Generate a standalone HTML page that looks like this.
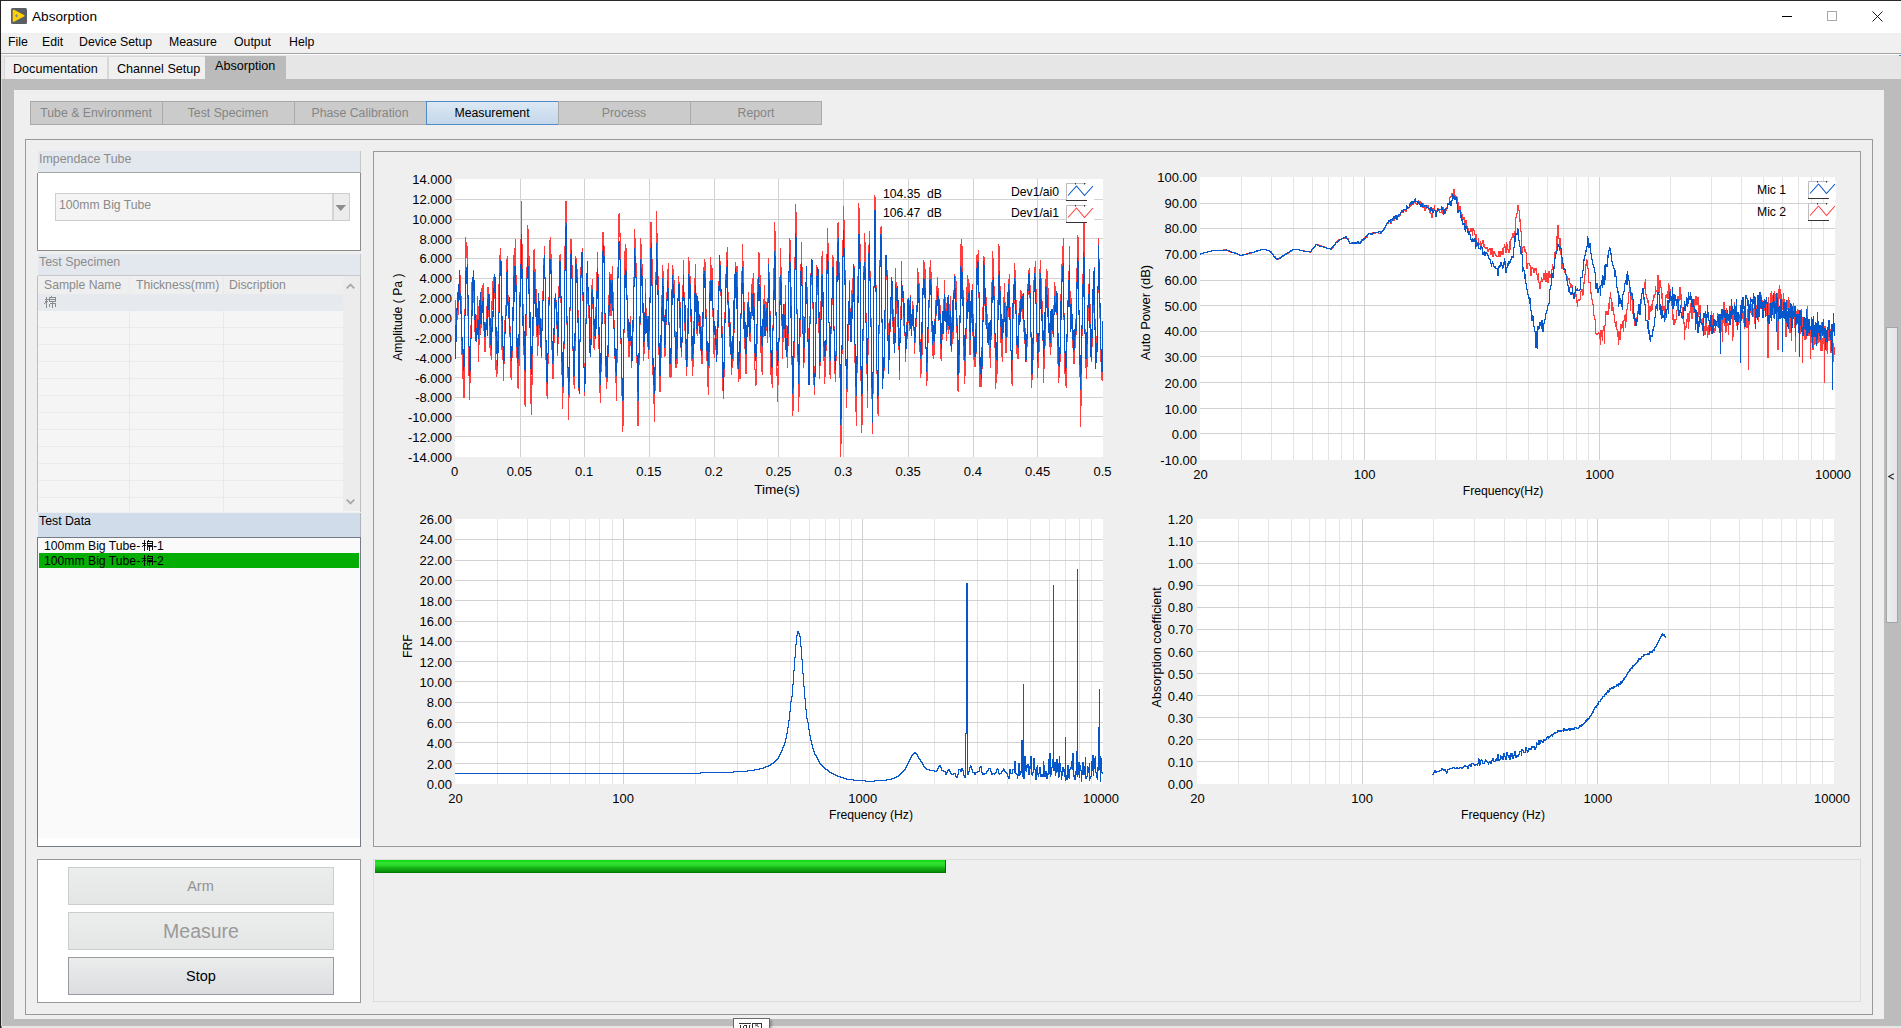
<!DOCTYPE html>
<html><head><meta charset="utf-8"><title>Absorption</title>
<style>html,body{margin:0;padding:0;} body{width:1901px;height:1028px;overflow:hidden;position:relative;font-family:"Liberation Sans", sans-serif;}</style>
</head><body>
<div style="position:absolute;left:0px;top:0px;width:1901px;height:1028px;box-sizing:border-box;background:#bcbcbc"></div>
<div style="position:absolute;left:0px;top:0px;width:1901px;height:33px;box-sizing:border-box;background:#fff"></div>
<div style="position:absolute;left:0px;top:0px;width:1901px;height:1px;box-sizing:border-box;background:#2b2b2b"></div>
<div style="position:absolute;left:0px;top:0px;width:1px;height:1028px;box-sizing:border-box;background:#222"></div>
<svg style="position:absolute;left:11px;top:8px" width="16" height="16" viewBox="0 0 16 16"><rect x="0" y="0" width="16" height="16" rx="1.5" fill="#5b5e64"/><path d="M2.6 2.6 L12.6 7.8 L2.6 13 Z" fill="#ffd100" stroke="#ffd100" stroke-width="1.8" stroke-linejoin="round"/><path d="M5.5 6.3V9.3M4 7.8H7" stroke="#7d8590" stroke-width="1"/></svg>
<div style="position:absolute;left:32px;top:10px;font-size:13.6px;line-height:1;color:#000;white-space:pre;">Absorption</div>
<div style="position:absolute;left:1782px;top:16px;width:10px;height:1px;box-sizing:border-box;background:#000"></div>
<div style="position:absolute;left:1827px;top:11px;width:10px;height:10px;box-sizing:border-box;border:1px solid #a8a8a8"></div>
<svg style="position:absolute;left:1872px;top:11px" width="11" height="11" viewBox="0 0 11 11"><path d="M0.5 0.5L10.5 10.5M10.5 0.5L0.5 10.5" stroke="#000" stroke-width="0.9"/></svg>
<div style="position:absolute;left:1px;top:33px;width:1900px;height:20px;box-sizing:border-box;background:#f0f0f0"></div>
<div style="position:absolute;left:8px;top:36px;font-size:12.3px;line-height:1;color:#000;white-space:pre;">File</div>
<div style="position:absolute;left:42px;top:36px;font-size:12.3px;line-height:1;color:#000;white-space:pre;">Edit</div>
<div style="position:absolute;left:79px;top:36px;font-size:12.3px;line-height:1;color:#000;white-space:pre;">Device Setup</div>
<div style="position:absolute;left:169px;top:36px;font-size:12.3px;line-height:1;color:#000;white-space:pre;">Measure</div>
<div style="position:absolute;left:234px;top:36px;font-size:12.3px;line-height:1;color:#000;white-space:pre;">Output</div>
<div style="position:absolute;left:289px;top:36px;font-size:12.3px;line-height:1;color:#000;white-space:pre;">Help</div>
<div style="position:absolute;left:1px;top:53px;width:1900px;height:1px;box-sizing:border-box;background:#a3a3a3"></div>
<div style="position:absolute;left:1px;top:54px;width:1900px;height:1px;box-sizing:border-box;background:#fdfdfd"></div>
<div style="position:absolute;left:1px;top:55px;width:1900px;height:24px;box-sizing:border-box;background:#e6e6e6"></div>
<div style="position:absolute;left:4px;top:56px;width:104px;height:23px;box-sizing:border-box;background:#f0f0f0;border:1px solid #d8d8d8;border-bottom:none"></div>
<div style="position:absolute;left:108px;top:56px;width:98px;height:23px;box-sizing:border-box;background:#f0f0f0;border:1px solid #d8d8d8;border-bottom:none"></div>
<div style="position:absolute;left:205px;top:56px;width:81px;height:23px;box-sizing:border-box;background:#bbbbbb"></div>
<div style="position:absolute;left:13px;top:63px;font-size:12.6px;line-height:1;color:#000;white-space:pre;">Documentation</div>
<div style="position:absolute;left:117px;top:63px;font-size:12.6px;line-height:1;color:#000;white-space:pre;">Channel Setup</div>
<div style="position:absolute;left:215px;top:60px;font-size:12.6px;line-height:1;color:#000;white-space:pre;">Absorption</div>
<div style="position:absolute;left:1px;top:1026px;width:1900px;height:2px;box-sizing:border-box;background:#e6e6e6"></div>
<div style="position:absolute;left:1px;top:79px;width:1px;height:949px;box-sizing:border-box;background:#d9d9d9"></div>
<div style="position:absolute;left:1px;top:1026px;width:1px;height:2px;box-sizing:border-box;background:#2a8cf0"></div>
<div style="position:absolute;left:1899px;top:55px;width:2px;height:1px;box-sizing:border-box;background:#2a8cf0"></div>
<div style="position:absolute;left:14px;top:90px;width:1870px;height:929px;box-sizing:border-box;background:#efefef"></div>
<div style="position:absolute;left:30px;top:101px;width:792px;height:24px;box-sizing:border-box;background:#cbcbcb;border:1px solid #a9a9a9"></div>
<div style="position:absolute;left:30.0px;top:107px;width:132px;text-align:center;font-size:12.3px;line-height:1;color:#858585;white-space:pre;">Tube &amp; Environment</div>
<div style="position:absolute;left:162px;top:101px;width:1px;height:24px;box-sizing:border-box;background:#a9a9a9"></div>
<div style="position:absolute;left:162.0px;top:107px;width:132px;text-align:center;font-size:12.3px;line-height:1;color:#858585;white-space:pre;">Test Specimen</div>
<div style="position:absolute;left:294px;top:101px;width:1px;height:24px;box-sizing:border-box;background:#a9a9a9"></div>
<div style="position:absolute;left:294.0px;top:107px;width:132px;text-align:center;font-size:12.3px;line-height:1;color:#858585;white-space:pre;">Phase Calibration</div>
<div style="position:absolute;left:426px;top:101px;width:1px;height:24px;box-sizing:border-box;background:#a9a9a9"></div>
<div style="position:absolute;left:426px;top:101px;width:133px;height:24px;box-sizing:border-box;background:linear-gradient(#dce8f4,#c4d7ea);border:1px solid #4f8ac9"></div>
<div style="position:absolute;left:426.0px;top:107px;width:132px;text-align:center;font-size:12.3px;line-height:1;color:#000;white-space:pre;">Measurement</div>
<div style="position:absolute;left:558px;top:101px;width:1px;height:24px;box-sizing:border-box;background:#a9a9a9"></div>
<div style="position:absolute;left:558.0px;top:107px;width:132px;text-align:center;font-size:12.3px;line-height:1;color:#858585;white-space:pre;">Process</div>
<div style="position:absolute;left:690px;top:101px;width:1px;height:24px;box-sizing:border-box;background:#a9a9a9"></div>
<div style="position:absolute;left:690.0px;top:107px;width:132px;text-align:center;font-size:12.3px;line-height:1;color:#858585;white-space:pre;">Report</div>
<div style="position:absolute;left:25px;top:139px;width:1848px;height:876px;box-sizing:border-box;border:1px solid #999"></div>
<div style="position:absolute;left:38px;top:151px;width:323px;height:22px;box-sizing:border-box;background:#e3e8ef;border-right:1px solid #c8c8c8;border-bottom:1px solid #a5a5a5"></div>
<div style="position:absolute;left:39px;top:153px;font-size:12.4px;line-height:1;color:#8c8c8c;white-space:pre;">Impendace Tube</div>
<div style="position:absolute;left:37px;top:173px;width:324px;height:78px;box-sizing:border-box;background:#fff;border:1px solid #8c8c8c;border-top:none"></div>
<div style="position:absolute;left:55px;top:193px;width:295px;height:28px;box-sizing:border-box;background:#f4f4f4;border:1px solid #cdcdcd"></div>
<div style="position:absolute;left:332px;top:194px;width:2px;height:26px;box-sizing:border-box;background:#d4d4d4"></div>
<div style="position:absolute;left:334px;top:194px;width:15px;height:26px;box-sizing:border-box;background:#ececec"></div>
<svg style="position:absolute;left:335px;top:205px" width="12" height="7"><path d="M0.5 0H11L5.75 6Z" fill="#8d8d8d"/></svg>
<div style="position:absolute;left:59px;top:199px;font-size:12.2px;line-height:1;color:#8a8a8a;white-space:pre;">100mm Big Tube</div>
<div style="position:absolute;left:38px;top:254px;width:323px;height:22px;box-sizing:border-box;background:#e3e8ef;border-right:1px solid #c8c8c8;border-bottom:1px solid #c8c8c8"></div>
<div style="position:absolute;left:39px;top:256px;font-size:12.4px;line-height:1;color:#8c8c8c;white-space:pre;">Test Specimen</div>
<div style="position:absolute;left:37px;top:276px;width:324px;height:236px;box-sizing:border-box;background:#f5f5f5;border:1px solid #bdbdbd;border-top:none;border-bottom:none"></div>
<div style="position:absolute;left:38px;top:276px;width:305px;height:18px;box-sizing:border-box;background:#efefef"></div>
<div style="position:absolute;left:38px;top:294px;width:305px;height:17px;box-sizing:border-box;background:#e6e9ee"></div>
<div style="position:absolute;left:38px;top:327px;width:305px;height:1px;box-sizing:border-box;background:#ebebeb"></div>
<div style="position:absolute;left:38px;top:344px;width:305px;height:1px;box-sizing:border-box;background:#ebebeb"></div>
<div style="position:absolute;left:38px;top:361px;width:305px;height:1px;box-sizing:border-box;background:#ebebeb"></div>
<div style="position:absolute;left:38px;top:378px;width:305px;height:1px;box-sizing:border-box;background:#ebebeb"></div>
<div style="position:absolute;left:38px;top:395px;width:305px;height:1px;box-sizing:border-box;background:#ebebeb"></div>
<div style="position:absolute;left:38px;top:412px;width:305px;height:1px;box-sizing:border-box;background:#ebebeb"></div>
<div style="position:absolute;left:38px;top:429px;width:305px;height:1px;box-sizing:border-box;background:#ebebeb"></div>
<div style="position:absolute;left:38px;top:446px;width:305px;height:1px;box-sizing:border-box;background:#ebebeb"></div>
<div style="position:absolute;left:38px;top:463px;width:305px;height:1px;box-sizing:border-box;background:#ebebeb"></div>
<div style="position:absolute;left:38px;top:480px;width:305px;height:1px;box-sizing:border-box;background:#ebebeb"></div>
<div style="position:absolute;left:38px;top:497px;width:305px;height:1px;box-sizing:border-box;background:#ebebeb"></div>
<div style="position:absolute;left:129px;top:276px;width:1px;height:235px;box-sizing:border-box;background:#e9e9e9"></div>
<div style="position:absolute;left:223px;top:276px;width:1px;height:235px;box-sizing:border-box;background:#e9e9e9"></div>
<div style="position:absolute;left:343px;top:276px;width:17px;height:235px;box-sizing:border-box;background:#ececec"></div>
<svg style="position:absolute;left:346px;top:283px" width="9" height="6"><path d="M0.7 5.3L4.5 1.5L8.3 5.3" fill="none" stroke="#a8a8a8" stroke-width="1.8"/></svg>
<svg style="position:absolute;left:346px;top:499px" width="9" height="6"><path d="M0.7 0.7L4.5 4.5L8.3 0.7" fill="none" stroke="#a8a8a8" stroke-width="1.8"/></svg>
<div style="position:absolute;left:44px;top:279px;font-size:12.2px;line-height:1;color:#8a8a8a;white-space:pre;">Sample Name</div>
<div style="position:absolute;left:136px;top:279px;font-size:12.2px;line-height:1;color:#8a8a8a;white-space:pre;">Thickness(mm)</div>
<div style="position:absolute;left:229px;top:279px;font-size:12.2px;line-height:1;color:#8a8a8a;white-space:pre;">Discription</div>
<svg style="position:absolute;left:44px;top:296px" width="12" height="12" viewBox="0 0 12 12"><g fill="none" stroke="#8a8a8a" stroke-width="1" shape-rendering="crispEdges">
<path d="M0.5 3.5H4.5M2.5 0.5V11.5M2.5 4.5L0.5 8M2.5 4.5L4.5 6.5"/>
<path d="M7.5 0.5L7 1.5M5.5 1.5H11.5V5.5H5.5ZM5.5 3.5H11.5"/>
<path d="M5.5 7.5V11M5.5 7.5H11.5V10.5H10.5M8.5 5.5V11.5"/>
</g></svg>
<div style="position:absolute;left:38px;top:513px;width:323px;height:24px;box-sizing:border-box;background:#d0dcea;border-right:1px solid #aeb4bc"></div>
<div style="position:absolute;left:39px;top:515px;font-size:12.3px;line-height:1;color:#000;white-space:pre;">Test Data</div>
<div style="position:absolute;left:37px;top:537px;width:324px;height:310px;box-sizing:border-box;background:#fafafa;border:1px solid #757c86"></div>
<div style="position:absolute;left:38px;top:838px;width:322px;height:8px;box-sizing:border-box;background:#fff"></div>
<div style="position:absolute;left:39px;top:553px;width:320px;height:15px;box-sizing:border-box;background:#05ae05"></div>
<div style="position:absolute;left:44px;top:540px;font-size:12.2px;line-height:1;color:#000;white-space:pre;">100mm Big Tube-</div>
<svg style="position:absolute;left:142px;top:540px" width="11" height="11" viewBox="0 0 12 12"><g fill="none" stroke="#000" stroke-width="1" shape-rendering="crispEdges">
<path d="M0.5 3.5H4.5M2.5 0.5V11.5M2.5 4.5L0.5 8M2.5 4.5L4.5 6.5"/>
<path d="M7.5 0.5L7 1.5M5.5 1.5H11.5V5.5H5.5ZM5.5 3.5H11.5"/>
<path d="M5.5 7.5V11M5.5 7.5H11.5V10.5H10.5M8.5 5.5V11.5"/>
</g></svg>
<div style="position:absolute;left:153px;top:540px;font-size:12.2px;line-height:1;color:#000;white-space:pre;">-1</div>
<div style="position:absolute;left:44px;top:555px;font-size:12.2px;line-height:1;color:#000;white-space:pre;">100mm Big Tube-</div>
<svg style="position:absolute;left:142px;top:555px" width="11" height="11" viewBox="0 0 12 12"><g fill="none" stroke="#000" stroke-width="1" shape-rendering="crispEdges">
<path d="M0.5 3.5H4.5M2.5 0.5V11.5M2.5 4.5L0.5 8M2.5 4.5L4.5 6.5"/>
<path d="M7.5 0.5L7 1.5M5.5 1.5H11.5V5.5H5.5ZM5.5 3.5H11.5"/>
<path d="M5.5 7.5V11M5.5 7.5H11.5V10.5H10.5M8.5 5.5V11.5"/>
</g></svg>
<div style="position:absolute;left:153px;top:555px;font-size:12.2px;line-height:1;color:#000;white-space:pre;">-2</div>
<div style="position:absolute;left:373px;top:151px;width:1488px;height:696px;box-sizing:border-box;border:1px solid #9a9a9a"></div>
<div style="position:absolute;left:37px;top:859px;width:324px;height:144px;box-sizing:border-box;background:#fff;border:1px solid #999"></div>
<div style="position:absolute;left:68px;top:867px;width:266px;height:38px;box-sizing:border-box;background:linear-gradient(#eceded,#e4e5e5);border:1px solid #cbced1"></div>
<div style="position:absolute;left:100.5px;top:879px;width:200px;text-align:center;font-size:14.5px;line-height:1;color:#929292;white-space:pre;">Arm</div>
<div style="position:absolute;left:68px;top:912px;width:266px;height:38px;box-sizing:border-box;background:linear-gradient(#eceded,#e4e5e5);border:1px solid #cbced1"></div>
<div style="position:absolute;left:101.0px;top:922px;width:200px;text-align:center;font-size:19.5px;line-height:1;color:#9a9a9a;white-space:pre;">Measure</div>
<div style="position:absolute;left:68px;top:957px;width:266px;height:38px;box-sizing:border-box;background:linear-gradient(#ebecec,#dcdde0);border:1px solid #989ca1"></div>
<div style="position:absolute;left:101.0px;top:969px;width:200px;text-align:center;font-size:14.5px;line-height:1;color:#000;white-space:pre;">Stop</div>
<div style="position:absolute;left:373px;top:859px;width:1488px;height:143px;box-sizing:border-box;border:1px solid #dcdcdc"></div>
<div style="position:absolute;left:375px;top:860px;width:571px;height:13px;box-sizing:border-box;background:linear-gradient(#0ddc0d 0%,#33e033 25%,#2ad82a 40%,#14b414 60%,#0c980c 85%,#057005 100%);border-right:1px solid #0a6a0a"></div>
<div style="position:absolute;left:733px;top:1018px;width:37px;height:12px;box-sizing:border-box;background:#fff;border:1px solid #6a6a6a;box-shadow:2px 2px 2px rgba(0,0,0,0.25)"></div>
<svg style="position:absolute;left:733px;top:1018px" width="37" height="10" viewBox="733 1018 37 10"><g fill="none" stroke="#333" stroke-width="1" shape-rendering="crispEdges"><path d="M739 1023.5H751M740.5 1025V1028M749.5 1025V1028M743.5 1025.5H746.5V1028M743.5 1025.5V1028"/><path d="M752.5 1023V1028M752 1023.5H762M761.5 1023V1028"/><path d="M755 1026L758 1024.5M755.5 1024.5L759 1027" stroke="#555" shape-rendering="auto"/></g></svg>
<div style="position:absolute;left:1886px;top:327px;width:12px;height:296px;box-sizing:border-box;background:linear-gradient(90deg,#eceeee,#e4e5e6);border:1px solid #a2a6aa"></div>
<svg style="position:absolute;left:1886px;top:470px" width="12" height="14"><path d="M7.8 3.8L2.8 6.5L7.8 9.2" fill="none" stroke="#222" stroke-width="1.1"/></svg>
<div style="position:absolute;left:455px;top:179px;width:648px;height:278px;box-sizing:border-box;background:#fff"></div>
<svg style="position:absolute;left:455px;top:179px" width="648" height="278" viewBox="455 179 648 278"><line x1="455" y1="199.5" x2="1103" y2="199.5" stroke="#d2d2d2" stroke-width="1"/><line x1="455" y1="219.5" x2="1103" y2="219.5" stroke="#d2d2d2" stroke-width="1"/><line x1="455" y1="238.5" x2="1103" y2="238.5" stroke="#d2d2d2" stroke-width="1"/><line x1="455" y1="258.5" x2="1103" y2="258.5" stroke="#d2d2d2" stroke-width="1"/><line x1="455" y1="278.5" x2="1103" y2="278.5" stroke="#d2d2d2" stroke-width="1"/><line x1="455" y1="298.5" x2="1103" y2="298.5" stroke="#d2d2d2" stroke-width="1"/><line x1="455" y1="318.5" x2="1103" y2="318.5" stroke="#d2d2d2" stroke-width="1"/><line x1="455" y1="337.5" x2="1103" y2="337.5" stroke="#d2d2d2" stroke-width="1"/><line x1="455" y1="357.5" x2="1103" y2="357.5" stroke="#d2d2d2" stroke-width="1"/><line x1="455" y1="377.5" x2="1103" y2="377.5" stroke="#d2d2d2" stroke-width="1"/><line x1="455" y1="397.5" x2="1103" y2="397.5" stroke="#d2d2d2" stroke-width="1"/><line x1="455" y1="416.5" x2="1103" y2="416.5" stroke="#d2d2d2" stroke-width="1"/><line x1="455" y1="436.5" x2="1103" y2="436.5" stroke="#d2d2d2" stroke-width="1"/><line x1="520.5" y1="179" x2="520.5" y2="457" stroke="#d2d2d2" stroke-width="1"/><line x1="584.5" y1="179" x2="584.5" y2="457" stroke="#d2d2d2" stroke-width="1"/><line x1="649.5" y1="179" x2="649.5" y2="457" stroke="#d2d2d2" stroke-width="1"/><line x1="714.5" y1="179" x2="714.5" y2="457" stroke="#d2d2d2" stroke-width="1"/><line x1="778.5" y1="179" x2="778.5" y2="457" stroke="#d2d2d2" stroke-width="1"/><line x1="843.5" y1="179" x2="843.5" y2="457" stroke="#d2d2d2" stroke-width="1"/><line x1="908.5" y1="179" x2="908.5" y2="457" stroke="#d2d2d2" stroke-width="1"/><line x1="973.5" y1="179" x2="973.5" y2="457" stroke="#d2d2d2" stroke-width="1"/><line x1="1037.5" y1="179" x2="1037.5" y2="457" stroke="#d2d2d2" stroke-width="1"/><path d="M455.5 300V344M456.5 308V327M457.5 295V320M458.5 288V315M459.5 271V298M460.5 275V298M461.5 296V355M462.5 350V379M463.5 371V398M464.5 309V398M465.5 237V313M466.5 242V258M467.5 246V316M468.5 309V376M469.5 372V400M470.5 325V383M471.5 282V326M472.5 278V290M473.5 270V303M474.5 287V332M475.5 317V339M476.5 315V339M477.5 296V324M478.5 306V362M479.5 315V345M480.5 293V335M481.5 288V328M482.5 285V302M483.5 283V331M484.5 325V352M485.5 322V352M486.5 306V326M487.5 287V325M488.5 287V317M489.5 301V348M490.5 340V356M491.5 301V360M492.5 281V310M493.5 277V302M494.5 276V299M495.5 292V370M496.5 360V377M497.5 331V374M498.5 284V338M499.5 255V287M500.5 248V274M501.5 264V350M502.5 336V360M503.5 351V381M504.5 320V364M505.5 305V327M506.5 259V306M507.5 256V306M508.5 295V319M509.5 297V337M510.5 326V378M511.5 357V380M512.5 308V358M513.5 255V315M514.5 248V278M515.5 239V287M516.5 275V358M517.5 351V388M518.5 348V389M519.5 292V366M520.5 239V302M521.5 201V246M522.5 244V320M523.5 304V355M524.5 346V405M525.5 334V407M526.5 267V336M527.5 225V268M528.5 229V268M529.5 256V322M530.5 312V404M531.5 376V415M532.5 325V385M533.5 250V336M534.5 249V274M535.5 269V304M536.5 289V337M537.5 319V356M538.5 304V346M539.5 310V335M540.5 320V348M541.5 319V358M542.5 291V320M543.5 258V301M544.5 246V278M545.5 277V360M546.5 350V396M547.5 360V399M548.5 297V364M549.5 240V306M550.5 237V265M551.5 254V350M552.5 346V379M553.5 332V379M554.5 302V343M555.5 293V309M556.5 300V329M557.5 312V356M558.5 286V344M559.5 255V294M560.5 254V303M561.5 297V375M562.5 358V409M563.5 341V393M564.5 246V349M565.5 201V252M566.5 201V325M567.5 316V378M568.5 376V420M569.5 307V398M570.5 239V311M571.5 239V266M572.5 265V351M573.5 346V385M574.5 346V389M575.5 256V351M576.5 258V280M577.5 269V313M578.5 310V391M579.5 339V394M580.5 267V340M581.5 254V278M582.5 248V301M583.5 296V364M584.5 363V396M585.5 318V381M586.5 274V321M587.5 269V304M588.5 292V318M589.5 309V348M590.5 317V348M591.5 285V335M592.5 279V309M593.5 306V348M594.5 324V350M595.5 307V338M596.5 272V318M597.5 252V282M598.5 274V349M599.5 342V393M600.5 362V403M601.5 312V372M602.5 232V316M603.5 232V250M604.5 246V324M605.5 323V377M606.5 359V389M607.5 345V382M608.5 295V357M609.5 272V316M610.5 274V316M611.5 274V316M612.5 266V303M613.5 292V321M614.5 320V359M615.5 354V383M616.5 360V401M617.5 267V363M618.5 214V269M619.5 213V237M620.5 233V344M621.5 343V396M622.5 395V432M623.5 332V426M624.5 251V333M625.5 244V278M626.5 248V296M627.5 295V338M628.5 328V357M629.5 322V357M630.5 316V346M631.5 340V368M632.5 320V361M633.5 277V332M634.5 229V284M635.5 238V269M636.5 263V363M637.5 362V426M638.5 359V426M639.5 316V365M640.5 238V325M641.5 244V281M642.5 264V311M643.5 310V361M644.5 312V354M645.5 279V332M646.5 308V332M647.5 316V347M648.5 325V359M649.5 297V350M650.5 222V298M651.5 222V263M652.5 259V375M653.5 368V404M654.5 387V422M655.5 272V391M656.5 211V279M657.5 233V277M658.5 276V355M659.5 353V392M660.5 346V392M661.5 295V358M662.5 265V316M663.5 271V322M664.5 315V357M665.5 309V356M666.5 292V325M667.5 269V298M668.5 263V323M669.5 322V377M670.5 360V378M671.5 289V377M672.5 265V303M673.5 269V289M674.5 280V332M675.5 331V368M676.5 340V368M677.5 298V364M678.5 276V301M679.5 282V328M680.5 302V348M681.5 338V357M682.5 285V343M683.5 260V298M684.5 292V331M685.5 312V360M686.5 343V376M687.5 308V367M688.5 257V325M689.5 261V294M690.5 276V322M691.5 315V361M692.5 343V376M693.5 321V367M694.5 278V336M695.5 264V300M696.5 293V334M697.5 307V336M698.5 304V326M699.5 314V334M700.5 316V351M701.5 326V364M702.5 317V364M703.5 267V327M704.5 259V278M705.5 262V313M706.5 309V361M707.5 353V387M708.5 362V395M709.5 281V368M710.5 257V285M711.5 265V283M712.5 268V317M713.5 311V354M714.5 338V358M715.5 326V350M716.5 329V356M717.5 310V355M718.5 281V328M719.5 257V288M720.5 261V296M721.5 290V334M722.5 326V391M723.5 369V399M724.5 312V377M725.5 274V321M726.5 252V280M727.5 247V305M728.5 292V327M729.5 308V347M730.5 322V355M731.5 341V375M732.5 336V368M733.5 300V361M734.5 279V333M735.5 262V292M736.5 266V292M737.5 266V369M738.5 363V382M739.5 358V379M740.5 313V379M741.5 271V319M742.5 244V276M743.5 261V322M744.5 302V349M745.5 327V374M746.5 332V374M747.5 302V333M748.5 292V317M749.5 307V341M750.5 318V342M751.5 284V319M752.5 278V308M753.5 273V307M754.5 293V370M755.5 369V386M756.5 340V385M757.5 279V344M758.5 252V281M759.5 253V283M760.5 275V353M761.5 339V372M762.5 330V375M763.5 299V337M764.5 285V317M765.5 301V327M766.5 302V331M767.5 298V343M768.5 258V299M769.5 272V337M770.5 311V375M771.5 368V384M772.5 325V388M773.5 268V331M774.5 222V271M775.5 231V316M776.5 315V376M777.5 368V402M778.5 339V385M779.5 277V342M780.5 248V283M781.5 267V326M782.5 323V359M783.5 314V342M784.5 304V338M785.5 285V334M786.5 325V353M787.5 341V368M788.5 281V346M789.5 238V282M790.5 240V294M791.5 287V365M792.5 364V416M793.5 347V411M794.5 257V358M795.5 204V258M796.5 212V310M797.5 309V362M798.5 354V412M799.5 329V397M800.5 264V337M801.5 242V269M802.5 267V317M803.5 316V368M804.5 332V363M805.5 288V333M806.5 266V300M807.5 287V333M808.5 328V377M809.5 316V381M810.5 273V317M811.5 260V285M812.5 261V309M813.5 308V385M814.5 366V395M815.5 302V370M816.5 265V307M817.5 269V295M818.5 271V333M819.5 324V379M820.5 301V366M821.5 256V312M822.5 251V302M823.5 297V361M824.5 351V384M825.5 350V377M826.5 254V351M827.5 228V257M828.5 243V323M829.5 322V375M830.5 326V379M831.5 304V334M832.5 255V305M833.5 257V327M834.5 326V374M835.5 351V382M836.5 261V361M837.5 223V262M838.5 222V276M839.5 262V378M840.5 370V457M841.5 353V444M842.5 240V354M843.5 206V242M844.5 220V271M845.5 270V366M846.5 360V408M847.5 339V392M848.5 313V341M849.5 280V321M850.5 308V331M851.5 290V334M852.5 278V307M853.5 266V289M854.5 266V363M855.5 362V412M856.5 366V426M857.5 276V373M858.5 203V282M859.5 208V249M860.5 244V381M861.5 380V433M862.5 340V425M863.5 266V341M864.5 233V270M865.5 242V314M866.5 313V374M867.5 354V408M868.5 245V355M869.5 231V278M870.5 271V319M871.5 318V399M872.5 387V434M873.5 287V394M874.5 195V288M875.5 197V286M876.5 285V374M877.5 373V414M878.5 333V416M879.5 260V334M880.5 227V266M881.5 226V323M882.5 322V385M883.5 359V379M884.5 325V371M885.5 262V329M886.5 259V280M887.5 270V331M888.5 323V366M889.5 319V355M890.5 307V332M891.5 284V314M892.5 292V327M893.5 309V339M894.5 317V345M895.5 268V333M896.5 282V314M897.5 296V327M898.5 316V350M899.5 328V380M900.5 306V337M901.5 261V307M902.5 285V302M903.5 292V326M904.5 303V336M905.5 334V362M906.5 322V348M907.5 299V339M908.5 302V323M909.5 300V331M910.5 295V327M911.5 314V334M912.5 301V325M913.5 305V331M914.5 329V354M915.5 325V343M916.5 305V327M917.5 268V310M918.5 272V292M919.5 283V352M920.5 339V378M921.5 341V374M922.5 288V355M923.5 260V295M924.5 262V279M925.5 269V349M926.5 348V386M927.5 339V381M928.5 305V343M929.5 267V308M930.5 260V280M931.5 272V332M932.5 329V356M933.5 335V359M934.5 319V355M935.5 300V334M936.5 286V316M937.5 277V303M938.5 288V321M939.5 299V317M940.5 305V359M941.5 325V361M942.5 312V340M943.5 299V333M944.5 280V312M945.5 297V316M946.5 303V341M947.5 309V330M948.5 304V334M949.5 304V330M950.5 296V344M951.5 317V352M952.5 310V344M953.5 290V339M954.5 274V296M955.5 276V300M956.5 281V333M957.5 318V391M958.5 364V392M959.5 315V373M960.5 244V316M961.5 239V282M962.5 246V301M963.5 290V360M964.5 351V384M965.5 336V376M966.5 287V339M967.5 275V311M968.5 279V300M969.5 283V355M970.5 308V355M971.5 296V323M972.5 284V336M973.5 314V360M974.5 336V367M975.5 323V367M976.5 255V354M977.5 254V279M978.5 250V298M979.5 297V387M980.5 364V387M981.5 347V387M982.5 307V369M983.5 256V309M984.5 257V306M985.5 290V325M986.5 297V326M987.5 314V338M988.5 324V344M989.5 329V358M990.5 329V368M991.5 282V340M992.5 251V291M993.5 258V287M994.5 286V348M995.5 347V389M996.5 359V383M997.5 300V374M998.5 244V309M999.5 246V299M1000.5 286V343M1001.5 332V357M1002.5 325V362M1003.5 297V327M1004.5 283V305M1005.5 302V353M1006.5 316V353M1007.5 300V337M1008.5 279V317M1009.5 274V311M1010.5 307V351M1011.5 350V384M1012.5 317V386M1013.5 284V319M1014.5 263V304M1015.5 270V306M1016.5 300V354M1017.5 344V359M1018.5 313V359M1019.5 301V324M1020.5 290V319M1021.5 291V312M1022.5 294V319M1023.5 300V332M1024.5 322V344M1025.5 328V360M1026.5 339V362M1027.5 284V347M1028.5 270V295M1029.5 268V298M1030.5 285V335M1031.5 332V388M1032.5 356V380M1033.5 280V360M1034.5 267V282M1035.5 261V295M1036.5 289V342M1037.5 334V378M1038.5 346V368M1039.5 269V352M1040.5 260V291M1041.5 278V311M1042.5 301V341M1043.5 330V383M1044.5 332V369M1045.5 279V346M1046.5 269V300M1047.5 271V303M1048.5 288V332M1049.5 327V347M1050.5 319V355M1051.5 317V347M1052.5 309V334M1053.5 305V331M1054.5 282V306M1055.5 286V312M1056.5 292V315M1057.5 302V364M1058.5 345V383M1059.5 361V378M1060.5 294V362M1061.5 264V313M1062.5 246V268M1063.5 238V320M1064.5 313V374M1065.5 368V386M1066.5 336V388M1067.5 300V342M1068.5 271V303M1069.5 246V301M1070.5 291V326M1071.5 298V327M1072.5 314V348M1073.5 342V364M1074.5 342V364M1075.5 319V348M1076.5 268V335M1077.5 235V271M1078.5 237V312M1079.5 310V377M1080.5 374V427M1081.5 334V406M1082.5 274V336M1083.5 222V286M1084.5 220V330M1085.5 329V368M1086.5 353V379M1087.5 320V367M1088.5 284V321M1089.5 269V306M1090.5 304V353M1091.5 337V362M1092.5 294V347M1093.5 284V313M1094.5 267V327M1095.5 319V369M1096.5 336V362M1097.5 292V347M1098.5 238V293M1099.5 259V318M1100.5 314V362M1101.5 349V380M1102.5 325V381" fill="none" stroke="#ff3d3d" stroke-width="1" shape-rendering="crispEdges"/><path d="M455.5 325V359M456.5 308V342M457.5 292V311M458.5 284V302M459.5 270V300M460.5 293V314M461.5 311V341M462.5 337V354M463.5 349V371M464.5 315V367M465.5 271V316M466.5 267V284M467.5 264V298M468.5 295V347M469.5 346V376M470.5 338V371M471.5 310V339M472.5 277V316M473.5 271V291M474.5 280V320M475.5 314V341M476.5 328V342M477.5 319V335M478.5 320V339M479.5 300V330M480.5 292V324M481.5 305V324M482.5 301V313M483.5 297V325M484.5 322V337M485.5 324V337M486.5 319V330M487.5 299V336M488.5 294V310M489.5 294V326M490.5 318V345M491.5 327V350M492.5 311V332M493.5 288V317M494.5 274V293M495.5 277V336M496.5 327V354M497.5 341V366M498.5 312V353M499.5 273V313M500.5 260V276M501.5 261V321M502.5 316V347M503.5 346V364M504.5 332V361M505.5 315V334M506.5 272V316M507.5 270V304M508.5 302V318M509.5 297V334M510.5 333V358M511.5 346V361M512.5 307V351M513.5 276V321M514.5 266V302M515.5 266V292M516.5 285V347M517.5 338V363M518.5 334V359M519.5 295V346M520.5 264V307M521.5 234V279M522.5 269V326M523.5 316V346M524.5 331V370M525.5 314V372M526.5 278V315M527.5 258V279M528.5 266V294M529.5 289V328M530.5 312V369M531.5 346V375M532.5 317V354M533.5 270V319M534.5 272V304M535.5 289V317M536.5 303V326M537.5 308V335M538.5 293V325M539.5 301V328M540.5 318V347M541.5 328V356M542.5 300V331M543.5 265V301M544.5 255V279M545.5 278V342M546.5 340V382M547.5 353V384M548.5 300V354M549.5 259V304M550.5 259V274M551.5 270V342M552.5 341V364M553.5 328V361M554.5 298V335M555.5 294V307M556.5 302V325M557.5 321V353M558.5 297V337M559.5 261V298M560.5 261V298M561.5 296V362M562.5 352V387M563.5 343V386M564.5 270V344M565.5 226V271M566.5 223V323M567.5 321V368M568.5 367V395M569.5 308V382M570.5 254V309M571.5 250V279M572.5 278V349M573.5 348V377M574.5 333V376M575.5 259V341M576.5 264V283M577.5 277V323M578.5 318V388M579.5 341V394M580.5 275V342M581.5 252V276M582.5 252V295M583.5 292V368M584.5 367V392M585.5 323V384M586.5 273V324M587.5 261V291M588.5 287V306M589.5 305V353M590.5 339V357M591.5 292V345M592.5 289V304M593.5 297V325M594.5 319V336M595.5 316V339M596.5 291V329M597.5 268V299M598.5 277V335M599.5 327V373M600.5 353V385M601.5 322V364M602.5 251V324M603.5 245V263M604.5 256V314M605.5 313V366M606.5 356V378M607.5 346V378M608.5 305V354M609.5 277V312M610.5 280V304M611.5 283V303M612.5 280V311M613.5 308V329M614.5 328V356M615.5 348V372M616.5 349V376M617.5 276V350M618.5 242V278M619.5 241V260M620.5 259V339M621.5 338V379M622.5 378V401M623.5 329V400M624.5 275V330M625.5 269V288M626.5 271V300M627.5 298V331M628.5 319V341M629.5 322V341M630.5 324V341M631.5 336V362M632.5 320V361M633.5 286V328M634.5 248V287M635.5 256V278M636.5 277V356M637.5 355V392M638.5 353V401M639.5 317V358M640.5 259V323M641.5 268V286M642.5 276V313M643.5 303V347M644.5 313V342M645.5 293V334M646.5 316V333M647.5 319V342M648.5 316V350M649.5 298V331M650.5 248V303M651.5 243V286M652.5 285V365M653.5 358V385M654.5 367V394M655.5 280V370M656.5 243V285M657.5 259V295M658.5 290V347M659.5 343V376M660.5 335V376M661.5 307V342M662.5 278V321M663.5 286V321M664.5 317V348M665.5 310V345M666.5 299V322M667.5 281V301M668.5 288V325M669.5 324V364M670.5 348V364M671.5 291V354M672.5 275V305M673.5 284V298M674.5 294V337M675.5 336V364M676.5 332V359M677.5 298V349M678.5 284V301M679.5 284V319M680.5 308V347M681.5 337V352M682.5 297V342M683.5 275V301M684.5 298V323M685.5 305V344M686.5 339V367M687.5 319V360M688.5 274V334M689.5 277V299M690.5 284V316M691.5 309V346M692.5 336V359M693.5 328V354M694.5 293V344M695.5 285V312M696.5 295V329M697.5 296V331M698.5 301V322M699.5 315V333M700.5 327V349M701.5 331V355M702.5 312V351M703.5 274V319M704.5 271V288M705.5 278V319M706.5 317V351M707.5 341V361M708.5 343V366M709.5 293V352M710.5 280V301M711.5 281V301M712.5 280V310M713.5 308V332M714.5 321V335M715.5 326V345M716.5 339V362M717.5 321V354M718.5 286V327M719.5 255V291M720.5 265V292M721.5 289V338M722.5 334V378M723.5 362V391M724.5 319V369M725.5 280V323M726.5 267V288M727.5 260V303M728.5 301V323M729.5 310V336M730.5 324V354M731.5 343V367M732.5 336V359M733.5 301V353M734.5 274V329M735.5 268V298M736.5 272V309M737.5 287V365M738.5 352V369M739.5 341V362M740.5 314V353M741.5 283V315M742.5 267V294M743.5 283V329M744.5 311V338M745.5 322V354M746.5 325V354M747.5 304V337M748.5 301V327M749.5 311V336M750.5 312V333M751.5 293V313M752.5 294V316M753.5 293V320M754.5 307V353M755.5 344V361M756.5 324V357M757.5 292V325M758.5 277V301M759.5 284V301M760.5 287V336M761.5 326V345M762.5 319V347M763.5 305V327M764.5 304V336M765.5 311V336M766.5 308V327M767.5 302V333M768.5 264V303M769.5 279V331M770.5 315V353M771.5 350V368M772.5 328V367M773.5 290V329M774.5 251V300M775.5 256V315M776.5 312V351M777.5 342V366M778.5 338V361M779.5 301V340M780.5 275V305M781.5 282V320M782.5 314V338M783.5 304V329M784.5 315V329M785.5 302V350M786.5 338V357M787.5 326V352M788.5 271V334M789.5 254V273M790.5 262V318M791.5 306V358M792.5 356V394M793.5 341V388M794.5 269V342M795.5 233V270M796.5 237V314M797.5 313V355M798.5 344V384M799.5 318V365M800.5 271V320M801.5 263V286M802.5 285V334M803.5 333V362M804.5 317V348M805.5 282V318M806.5 266V304M807.5 299V342M808.5 339V385M809.5 323V385M810.5 275V324M811.5 259V277M812.5 260V303M813.5 302V378M814.5 373V387M815.5 323V377M816.5 276V324M817.5 267V287M818.5 269V318M819.5 312V366M820.5 319V362M821.5 276V320M822.5 274V307M823.5 292V347M824.5 341V357M825.5 340V356M826.5 270V345M827.5 254V274M828.5 261V323M829.5 322V357M830.5 327V361M831.5 298V329M832.5 267V299M833.5 267V331M834.5 329V361M835.5 355V370M836.5 276V356M837.5 242V282M838.5 238V280M839.5 273V365M840.5 364V425M841.5 345V419M842.5 256V350M843.5 230V257M844.5 248V285M845.5 279V366M846.5 359V389M847.5 324V369M848.5 301V325M849.5 282V325M850.5 312V342M851.5 306V342M852.5 294V319M853.5 264V302M854.5 268V345M855.5 344V387M856.5 356V396M857.5 296V364M858.5 234V303M859.5 234V269M860.5 262V370M861.5 366V396M862.5 329V394M863.5 272V330M864.5 262V280M865.5 268V323M866.5 322V364M867.5 338V391M868.5 253V339M869.5 243V281M870.5 278V327M871.5 326V388M872.5 372V423M873.5 286V373M874.5 210V287M875.5 210V292M876.5 288V371M877.5 370V399M878.5 325V396M879.5 266V326M880.5 234V267M881.5 236V322M882.5 319V389M883.5 357V378M884.5 310V368M885.5 255V311M886.5 255V276M887.5 275V341M888.5 335V374M889.5 322V360M890.5 297V329M891.5 277V300M892.5 281V321M893.5 317V344M894.5 333V353M895.5 284V343M896.5 288V301M897.5 286V308M898.5 300V346M899.5 338V371M900.5 319V343M901.5 281V320M902.5 286V298M903.5 291V317M904.5 303V333M905.5 332V353M906.5 325V349M907.5 300V336M908.5 298V321M909.5 305V325M910.5 297V329M911.5 314V336M912.5 309V326M913.5 309V328M914.5 327V343M915.5 318V338M916.5 305V319M917.5 284V312M918.5 284V303M919.5 298V345M920.5 342V359M921.5 322V356M922.5 288V334M923.5 278V295M924.5 279V298M925.5 288V349M926.5 347V372M927.5 327V363M928.5 300V329M929.5 280V301M930.5 279V295M931.5 285V325M932.5 321V345M933.5 325V341M934.5 321V342M935.5 306V334M936.5 300V314M937.5 291V306M938.5 296V320M939.5 300V320M940.5 314V344M941.5 323V349M942.5 311V334M943.5 311V334M944.5 294V321M945.5 309V322M946.5 311V332M947.5 297V325M948.5 295V326M949.5 315V329M950.5 311V346M951.5 323V350M952.5 300V332M953.5 293V330M954.5 276V299M955.5 288V310M956.5 302V326M957.5 325V375M958.5 340V375M959.5 316V355M960.5 266V323M961.5 268V299M962.5 272V306M963.5 297V346M964.5 335V361M965.5 328V356M966.5 302V329M967.5 299V319M968.5 293V312M969.5 291V332M970.5 301V340M971.5 290V318M972.5 290V332M973.5 319V353M974.5 337V357M975.5 329V357M976.5 268V352M977.5 261V285M978.5 262V293M979.5 292V366M980.5 357V374M981.5 351V379M982.5 320V367M983.5 261V322M984.5 265V304M985.5 288V312M986.5 306V329M987.5 327V343M988.5 323V345M989.5 322V340M990.5 320V348M991.5 297V336M992.5 280V303M993.5 277V300M994.5 296V334M995.5 333V357M996.5 342V360M997.5 319V361M998.5 275V320M999.5 271V305M1000.5 291V327M1001.5 314V339M1002.5 319V339M1003.5 319V333M1004.5 303V322M1005.5 317V336M1006.5 306V338M1007.5 292V311M1008.5 284V308M1009.5 290V320M1010.5 319V351M1011.5 350V371M1012.5 303V360M1013.5 285V307M1014.5 278V300M1015.5 281V314M1016.5 310V345M1017.5 336V347M1018.5 315V348M1019.5 308V325M1020.5 299V322M1021.5 296V311M1022.5 296V309M1023.5 293V321M1024.5 320V340M1025.5 332V362M1026.5 334V360M1027.5 289V339M1028.5 274V291M1029.5 273V294M1030.5 293V337M1031.5 334V375M1032.5 338V374M1033.5 291V344M1034.5 273V292M1035.5 277V304M1036.5 303V334M1037.5 333V362M1038.5 333V353M1039.5 279V336M1040.5 273V309M1041.5 299V321M1042.5 314V340M1043.5 331V357M1044.5 312V349M1045.5 286V329M1046.5 287V308M1047.5 295V317M1048.5 308V333M1049.5 323V340M1050.5 311V343M1051.5 309V330M1052.5 309V331M1053.5 314V337M1054.5 296V315M1055.5 303V312M1056.5 291V313M1057.5 293V346M1058.5 333V366M1059.5 347V367M1060.5 301V354M1061.5 279V320M1062.5 266V282M1063.5 263V317M1064.5 315V353M1065.5 351V372M1066.5 334V368M1067.5 301V337M1068.5 280V307M1069.5 265V307M1070.5 304V332M1071.5 304V329M1072.5 314V340M1073.5 330V352M1074.5 329V350M1075.5 324V337M1076.5 282V331M1077.5 257V289M1078.5 261V315M1079.5 310V365M1080.5 355V390M1081.5 325V374M1082.5 284V329M1083.5 252V297M1084.5 257V334M1085.5 333V359M1086.5 332V359M1087.5 305V344M1088.5 294V308M1089.5 283V328M1090.5 324V357M1091.5 329V360M1092.5 289V338M1093.5 271V305M1094.5 268V330M1095.5 327V369M1096.5 343V363M1097.5 286V352M1098.5 245V290M1099.5 262V308M1100.5 303V350M1101.5 349V372M1102.5 321V372" fill="none" stroke="#0656cc" stroke-width="1" shape-rendering="crispEdges"/></svg>
<div style="position:absolute;left:883px;top:188px;font-size:12.2px;line-height:1;color:#000;white-space:pre;">104.35  dB</div>
<div style="position:absolute;left:883px;top:207px;font-size:12.2px;line-height:1;color:#000;white-space:pre;">106.47  dB</div>
<div style="position:absolute;left:1011px;top:186px;font-size:12.2px;line-height:1;color:#000;white-space:pre;">Dev1/ai0</div>
<div style="position:absolute;left:1011px;top:207px;font-size:12.2px;line-height:1;color:#000;white-space:pre;">Dev1/ai1</div>
<svg style="position:absolute;left:1066px;top:183px" width="30" height="19" viewBox="0 0 30 19"><rect x="0" y="0" width="28" height="18" fill="#fff"/><path d="M0.5 17V0.5H20.5" fill="none" stroke="#bdbdbd" stroke-width="1"/><path d="M9.5 0V1.5M18.5 0V1.5" stroke="#333" stroke-width="1"/><path d="M0 17.5H21" stroke="#333" stroke-width="1"/><path d="M2 12.5L10.5 3L18.5 12.5L27 3" fill="none" stroke="#0656cc" stroke-width="1.1"/></svg>
<svg style="position:absolute;left:1066px;top:205px" width="30" height="19" viewBox="0 0 30 19"><rect x="0" y="0" width="28" height="18" fill="#fff"/><path d="M0.5 17V0.5H20.5" fill="none" stroke="#bdbdbd" stroke-width="1"/><path d="M9.5 0V1.5M18.5 0V1.5" stroke="#333" stroke-width="1"/><path d="M0 17.5H21" stroke="#333" stroke-width="1"/><path d="M2 12.5L10.5 3L18.5 12.5L27 3" fill="none" stroke="#ff3d3d" stroke-width="1.1"/></svg>
<div style="position:absolute;left:372px;top:173px;width:80px;text-align:right;font-size:13px;line-height:1;color:#000;white-space:pre;">14.000</div>
<div style="position:absolute;left:372px;top:193px;width:80px;text-align:right;font-size:13px;line-height:1;color:#000;white-space:pre;">12.000</div>
<div style="position:absolute;left:372px;top:213px;width:80px;text-align:right;font-size:13px;line-height:1;color:#000;white-space:pre;">10.000</div>
<div style="position:absolute;left:372px;top:233px;width:80px;text-align:right;font-size:13px;line-height:1;color:#000;white-space:pre;">8.000</div>
<div style="position:absolute;left:372px;top:252px;width:80px;text-align:right;font-size:13px;line-height:1;color:#000;white-space:pre;">6.000</div>
<div style="position:absolute;left:372px;top:272px;width:80px;text-align:right;font-size:13px;line-height:1;color:#000;white-space:pre;">4.000</div>
<div style="position:absolute;left:372px;top:292px;width:80px;text-align:right;font-size:13px;line-height:1;color:#000;white-space:pre;">2.000</div>
<div style="position:absolute;left:372px;top:312px;width:80px;text-align:right;font-size:13px;line-height:1;color:#000;white-space:pre;">0.000</div>
<div style="position:absolute;left:372px;top:332px;width:80px;text-align:right;font-size:13px;line-height:1;color:#000;white-space:pre;">-2.000</div>
<div style="position:absolute;left:372px;top:352px;width:80px;text-align:right;font-size:13px;line-height:1;color:#000;white-space:pre;">-4.000</div>
<div style="position:absolute;left:372px;top:372px;width:80px;text-align:right;font-size:13px;line-height:1;color:#000;white-space:pre;">-6.000</div>
<div style="position:absolute;left:372px;top:391px;width:80px;text-align:right;font-size:13px;line-height:1;color:#000;white-space:pre;">-8.000</div>
<div style="position:absolute;left:372px;top:411px;width:80px;text-align:right;font-size:13px;line-height:1;color:#000;white-space:pre;">-10.000</div>
<div style="position:absolute;left:372px;top:431px;width:80px;text-align:right;font-size:13px;line-height:1;color:#000;white-space:pre;">-12.000</div>
<div style="position:absolute;left:372px;top:451px;width:80px;text-align:right;font-size:13px;line-height:1;color:#000;white-space:pre;">-14.000</div>
<div style="position:absolute;left:414.5px;top:465px;width:80px;text-align:center;font-size:13px;line-height:1;color:#000;white-space:pre;">0</div>
<div style="position:absolute;left:479.29999999999995px;top:465px;width:80px;text-align:center;font-size:13px;line-height:1;color:#000;white-space:pre;">0.05</div>
<div style="position:absolute;left:544.1px;top:465px;width:80px;text-align:center;font-size:13px;line-height:1;color:#000;white-space:pre;">0.1</div>
<div style="position:absolute;left:608.9px;top:465px;width:80px;text-align:center;font-size:13px;line-height:1;color:#000;white-space:pre;">0.15</div>
<div style="position:absolute;left:673.7px;top:465px;width:80px;text-align:center;font-size:13px;line-height:1;color:#000;white-space:pre;">0.2</div>
<div style="position:absolute;left:738.5px;top:465px;width:80px;text-align:center;font-size:13px;line-height:1;color:#000;white-space:pre;">0.25</div>
<div style="position:absolute;left:803.3px;top:465px;width:80px;text-align:center;font-size:13px;line-height:1;color:#000;white-space:pre;">0.3</div>
<div style="position:absolute;left:868.1px;top:465px;width:80px;text-align:center;font-size:13px;line-height:1;color:#000;white-space:pre;">0.35</div>
<div style="position:absolute;left:932.9px;top:465px;width:80px;text-align:center;font-size:13px;line-height:1;color:#000;white-space:pre;">0.4</div>
<div style="position:absolute;left:997.7px;top:465px;width:80px;text-align:center;font-size:13px;line-height:1;color:#000;white-space:pre;">0.45</div>
<div style="position:absolute;left:1062.5px;top:465px;width:80px;text-align:center;font-size:13px;line-height:1;color:#000;white-space:pre;">0.5</div>
<div style="position:absolute;left:717.0px;top:482.5px;width:120px;text-align:center;font-size:13.6px;line-height:1;color:#000;white-space:pre;">Time(s)</div>
<div style="position:absolute;left:248px;top:310.9px;width:300px;text-align:center;font-size:12.2px;line-height:1;color:#000;white-space:pre;letter-spacing:0px;transform:rotate(-90deg);">Amplitude ( Pa )</div>
<div style="position:absolute;left:1200px;top:177px;width:635px;height:283px;box-sizing:border-box;background:#fff"></div>
<svg style="position:absolute;left:1200px;top:177px" width="635" height="283" viewBox="1200 177 635 283"><line x1="1241.5" y1="177" x2="1241.5" y2="460" stroke="#e4e4e4" stroke-width="1"/><line x1="1271.5" y1="177" x2="1271.5" y2="460" stroke="#e4e4e4" stroke-width="1"/><line x1="1293.5" y1="177" x2="1293.5" y2="460" stroke="#e4e4e4" stroke-width="1"/><line x1="1312.5" y1="177" x2="1312.5" y2="460" stroke="#e4e4e4" stroke-width="1"/><line x1="1328.5" y1="177" x2="1328.5" y2="460" stroke="#e4e4e4" stroke-width="1"/><line x1="1341.5" y1="177" x2="1341.5" y2="460" stroke="#e4e4e4" stroke-width="1"/><line x1="1353.5" y1="177" x2="1353.5" y2="460" stroke="#e4e4e4" stroke-width="1"/><line x1="1364.5" y1="177" x2="1364.5" y2="460" stroke="#d0d0d0" stroke-width="1"/><line x1="1435.5" y1="177" x2="1435.5" y2="460" stroke="#e4e4e4" stroke-width="1"/><line x1="1476.5" y1="177" x2="1476.5" y2="460" stroke="#e4e4e4" stroke-width="1"/><line x1="1506.5" y1="177" x2="1506.5" y2="460" stroke="#e4e4e4" stroke-width="1"/><line x1="1528.5" y1="177" x2="1528.5" y2="460" stroke="#e4e4e4" stroke-width="1"/><line x1="1547.5" y1="177" x2="1547.5" y2="460" stroke="#e4e4e4" stroke-width="1"/><line x1="1563.5" y1="177" x2="1563.5" y2="460" stroke="#e4e4e4" stroke-width="1"/><line x1="1576.5" y1="177" x2="1576.5" y2="460" stroke="#e4e4e4" stroke-width="1"/><line x1="1588.5" y1="177" x2="1588.5" y2="460" stroke="#e4e4e4" stroke-width="1"/><line x1="1599.5" y1="177" x2="1599.5" y2="460" stroke="#d0d0d0" stroke-width="1"/><line x1="1670.5" y1="177" x2="1670.5" y2="460" stroke="#e4e4e4" stroke-width="1"/><line x1="1711.5" y1="177" x2="1711.5" y2="460" stroke="#e4e4e4" stroke-width="1"/><line x1="1741.5" y1="177" x2="1741.5" y2="460" stroke="#e4e4e4" stroke-width="1"/><line x1="1763.5" y1="177" x2="1763.5" y2="460" stroke="#e4e4e4" stroke-width="1"/><line x1="1782.5" y1="177" x2="1782.5" y2="460" stroke="#e4e4e4" stroke-width="1"/><line x1="1798.5" y1="177" x2="1798.5" y2="460" stroke="#e4e4e4" stroke-width="1"/><line x1="1811.5" y1="177" x2="1811.5" y2="460" stroke="#e4e4e4" stroke-width="1"/><line x1="1823.5" y1="177" x2="1823.5" y2="460" stroke="#e4e4e4" stroke-width="1"/><line x1="1200" y1="203.5" x2="1835" y2="203.5" stroke="#d2d2d2" stroke-width="1"/><line x1="1200" y1="228.5" x2="1835" y2="228.5" stroke="#d2d2d2" stroke-width="1"/><line x1="1200" y1="254.5" x2="1835" y2="254.5" stroke="#d2d2d2" stroke-width="1"/><line x1="1200" y1="280.5" x2="1835" y2="280.5" stroke="#d2d2d2" stroke-width="1"/><line x1="1200" y1="305.5" x2="1835" y2="305.5" stroke="#d2d2d2" stroke-width="1"/><line x1="1200" y1="331.5" x2="1835" y2="331.5" stroke="#d2d2d2" stroke-width="1"/><line x1="1200" y1="356.5" x2="1835" y2="356.5" stroke="#d2d2d2" stroke-width="1"/><line x1="1200" y1="382.5" x2="1835" y2="382.5" stroke="#d2d2d2" stroke-width="1"/><line x1="1200" y1="408.5" x2="1835" y2="408.5" stroke="#d2d2d2" stroke-width="1"/><line x1="1200" y1="433.5" x2="1835" y2="433.5" stroke="#d2d2d2" stroke-width="1"/><path d="M1200.5 253V255M1201.5 253V254M1202.5 253V254M1203.5 252V254M1204.5 252V253M1205.5 252V253M1206.5 252V253M1207.5 251V253M1208.5 251V252M1209.5 251V252M1210.5 251V252M1211.5 250V252M1212.5 250V251M1213.5 250V251M1214.5 250V251M1215.5 250V251M1216.5 250V251M1217.5 250V251M1218.5 250V251M1219.5 250V251M1220.5 250V251M1221.5 250V251M1222.5 250V251M1223.5 249V251M1224.5 249V250M1225.5 249V251M1226.5 250V251M1227.5 250V251M1228.5 250V252M1229.5 251V252M1230.5 251V253M1231.5 252V253M1232.5 252V253M1233.5 252V253M1234.5 252V253M1235.5 252V254M1236.5 253V254M1237.5 253V255M1238.5 254V255M1239.5 254V256M1240.5 255V256M1241.5 255V256M1242.5 255V256M1243.5 254V256M1244.5 254V255M1245.5 254V255M1246.5 253V255M1247.5 253V255M1248.5 253V254M1249.5 253V254M1250.5 253V254M1251.5 252V254M1252.5 252V253M1253.5 252V253M1254.5 251V253M1255.5 251V252M1256.5 251V252M1257.5 250V252M1258.5 250V251M1259.5 250V251M1260.5 249V251M1261.5 249V250M1262.5 249V250M1263.5 249V250M1264.5 249V250M1265.5 249V250M1266.5 249V251M1267.5 250V251M1268.5 250V251M1269.5 250V252M1270.5 251V252M1271.5 251V254M1272.5 253V255M1273.5 254V257M1274.5 256V257M1275.5 256V259M1276.5 258V260M1277.5 259V260M1278.5 258V260M1279.5 257V259M1280.5 257V258M1281.5 256V258M1282.5 256V257M1283.5 255V257M1284.5 254V256M1285.5 253V255M1286.5 253V254M1287.5 253V254M1288.5 252V254M1289.5 251V253M1290.5 251V252M1291.5 250V252M1292.5 249V251M1293.5 249V250M1294.5 249V250M1295.5 249V250M1296.5 249V250M1297.5 249V250M1298.5 249V250M1299.5 249V251M1300.5 250V251M1301.5 250V251M1302.5 250V251M1303.5 250V251M1304.5 250V252M1305.5 251V252M1306.5 251V252M1307.5 251V252M1308.5 251V252M1309.5 251V253M1310.5 251V253M1311.5 249V252M1312.5 248V250M1313.5 247V249M1314.5 246V248M1315.5 244V247M1316.5 244V245M1317.5 244V245M1318.5 244V246M1319.5 245V246M1320.5 245V246M1321.5 245V247M1322.5 246V247M1323.5 246V247M1324.5 246V248M1325.5 247V248M1326.5 247V249M1327.5 248V249M1328.5 248V249M1329.5 248V249M1330.5 248V250M1331.5 248V250M1332.5 247V249M1333.5 245V248M1334.5 244V246M1335.5 242V245M1336.5 241V243M1337.5 240V242M1338.5 239V241M1339.5 239V240M1340.5 239V240M1341.5 238V240M1342.5 238V239M1343.5 237V239M1344.5 237V239M1345.5 236V239M1346.5 236V239M1347.5 238V239M1348.5 238V242M1349.5 241V244M1350.5 243V244M1351.5 242V244M1352.5 242V244M1353.5 242V244M1354.5 242V244M1355.5 242V244M1356.5 242V244M1357.5 242V244M1358.5 242V244M1359.5 242V243M1360.5 242V243M1361.5 239V243M1362.5 240V241M1363.5 238V241M1364.5 237V239M1365.5 236V238M1366.5 236V238M1367.5 234V238M1368.5 233V235M1369.5 233V234M1370.5 233V234M1371.5 233V234M1372.5 232V235M1373.5 232V233M1374.5 232V234M1375.5 232V234M1376.5 232V233M1377.5 232V233M1378.5 232V234M1379.5 233V234M1380.5 232V234M1381.5 231V234M1382.5 230V232M1383.5 228V231M1384.5 227V229M1385.5 225V228M1386.5 223V226M1387.5 223V224M1388.5 221V224M1389.5 221V222M1390.5 221V224M1391.5 220V224M1392.5 218V221M1393.5 218V221M1394.5 217V221M1395.5 216V218M1396.5 215V217M1397.5 215V217M1398.5 214V217M1399.5 214V217M1400.5 212V216M1401.5 212V213M1402.5 212V213M1403.5 210V213M1404.5 209V211M1405.5 209V212M1406.5 208V212M1407.5 207V209M1408.5 207V209M1409.5 203V208M1410.5 203V207M1411.5 202V206M1412.5 203V205M1413.5 202V205M1414.5 202V203M1415.5 202V204M1416.5 203V205M1417.5 202V205M1418.5 200V203M1419.5 201V204M1420.5 201V206M1421.5 202V206M1422.5 203V208M1423.5 203V208M1424.5 207V211M1425.5 206V211M1426.5 207V209M1427.5 205V208M1428.5 205V210M1429.5 209V213M1430.5 209V214M1431.5 213V218M1432.5 208V218M1433.5 208V213M1434.5 205V211M1435.5 210V211M1436.5 210V211M1437.5 210V211M1438.5 208V211M1439.5 209V213M1440.5 212V213M1441.5 210V213M1442.5 210V214M1443.5 207V211M1444.5 210V213M1445.5 210V214M1446.5 207V211M1447.5 204V208M1448.5 203V205M1449.5 197V204M1450.5 196V198M1451.5 193V197M1452.5 193V197M1453.5 189V196M1454.5 189V196M1455.5 195V198M1456.5 196V198M1457.5 197V203M1458.5 202V212M1459.5 206V212M1460.5 206V213M1461.5 212V215M1462.5 214V220M1463.5 217V220M1464.5 217V223M1465.5 220V226M1466.5 220V227M1467.5 226V230M1468.5 228V232M1469.5 231V232M1470.5 228V232M1471.5 228V232M1472.5 228V236M1473.5 228V231M1474.5 230V235M1475.5 234V238M1476.5 234V244M1477.5 242V244M1478.5 238V245M1479.5 243V245M1480.5 241V249M1481.5 243V249M1482.5 240V244M1483.5 240V247M1484.5 244V248M1485.5 247V249M1486.5 247V249M1487.5 247V252M1488.5 249V252M1489.5 248V250M1490.5 248V255M1491.5 248V255M1492.5 248V257M1493.5 251V257M1494.5 251V254M1495.5 253V256M1496.5 255V257M1497.5 256V257M1498.5 251V257M1499.5 251V257M1500.5 251V257M1501.5 251V255M1502.5 248V255M1503.5 247V255M1504.5 244V248M1505.5 246V253M1506.5 242V253M1507.5 244V250M1508.5 249V253M1509.5 241V253M1510.5 239V250M1511.5 237V240M1512.5 233V238M1513.5 233V238M1514.5 231V238M1515.5 217V234M1516.5 213V218M1517.5 205V214M1518.5 205V211M1519.5 210V222M1520.5 219V232M1521.5 231V254M1522.5 247V253M1523.5 246V248M1524.5 246V252M1525.5 249V253M1526.5 252V269M1527.5 263V269M1528.5 263V264M1529.5 263V266M1530.5 265V276M1531.5 267V276M1532.5 267V269M1533.5 268V273M1534.5 268V273M1535.5 268V271M1536.5 268V275M1537.5 274V280M1538.5 273V283M1539.5 282V289M1540.5 281V289M1541.5 277V282M1542.5 279V282M1543.5 273V280M1544.5 273V280M1545.5 270V282M1546.5 273V282M1547.5 273V283M1548.5 271V283M1549.5 271V278M1550.5 274V278M1551.5 269V275M1552.5 264V270M1553.5 266V268M1554.5 252V267M1555.5 251V253M1556.5 236V253M1557.5 225V250M1558.5 225V239M1559.5 238V251M1560.5 238V255M1561.5 254V269M1562.5 263V269M1563.5 263V270M1564.5 269V273M1565.5 270V275M1566.5 274V277M1567.5 276V280M1568.5 278V280M1569.5 278V284M1570.5 283V288M1571.5 284V288M1572.5 285V295M1573.5 294V299M1574.5 293V299M1575.5 291V297M1576.5 294V303M1577.5 300V307M1578.5 299V301M1579.5 299V301M1580.5 291V300M1581.5 289V292M1582.5 289V296M1583.5 282V295M1584.5 274V284M1585.5 264V275M1586.5 259V266M1587.5 260V269M1588.5 268V283M1589.5 282V283M1590.5 282V294M1591.5 292V300M1592.5 299V305M1593.5 304V316M1594.5 315V320M1595.5 319V334M1596.5 333V335M1597.5 333V335M1598.5 332V334M1599.5 333V339M1600.5 330V345M1601.5 330V337M1602.5 330V341M1603.5 326V331M1604.5 325V344M1605.5 311V326M1606.5 311V315M1607.5 311V315M1608.5 303V315M1609.5 297V309M1610.5 292V299M1611.5 298V311M1612.5 302V311M1613.5 307V315M1614.5 314V323M1615.5 322V327M1616.5 321V330M1617.5 329V337M1618.5 331V345M1619.5 331V340M1620.5 324V340M1621.5 324V329M1622.5 321V328M1623.5 320V332M1624.5 315V321M1625.5 314V328M1626.5 309V322M1627.5 303V310M1628.5 292V304M1629.5 286V293M1630.5 289V311M1631.5 292V300M1632.5 299V314M1633.5 313V319M1634.5 318V326M1635.5 322V326M1636.5 317V325M1637.5 311V318M1638.5 306V312M1639.5 305V308M1640.5 300V306M1641.5 293V304M1642.5 291V294M1643.5 288V300M1644.5 282V289M1645.5 279V295M1646.5 294V299M1647.5 298V303M1648.5 300V320M1649.5 306V320M1650.5 306V312M1651.5 304V311M1652.5 300V310M1653.5 295V301M1654.5 294V298M1655.5 286V295M1656.5 290V292M1657.5 275V292M1658.5 275V293M1659.5 280V293M1660.5 280V288M1661.5 287V299M1662.5 293V311M1663.5 306V311M1664.5 306V320M1665.5 295V320M1666.5 294V298M1667.5 291V299M1668.5 283V299M1669.5 285V293M1670.5 289V298M1671.5 296V306M1672.5 305V320M1673.5 314V325M1674.5 319V325M1675.5 319V323M1676.5 310V320M1677.5 296V311M1678.5 296V305M1679.5 287V301M1680.5 287V300M1681.5 294V308M1682.5 307V316M1683.5 315V324M1684.5 322V340M1685.5 326V330M1686.5 319V328M1687.5 313V322M1688.5 313V329M1689.5 311V322M1690.5 303V313M1691.5 304V319M1692.5 304V319M1693.5 304V313M1694.5 299V313M1695.5 296V305M1696.5 296V305M1697.5 297V305M1698.5 297V317M1699.5 305V315M1700.5 305V323M1701.5 319V323M1702.5 318V328M1703.5 320V335M1704.5 326V335M1705.5 316V335M1706.5 316V331M1707.5 327V338M1708.5 325V335M1709.5 321V335M1710.5 320V331M1711.5 311V331M1712.5 315V327M1713.5 313V333M1714.5 328V333M1715.5 324V331M1716.5 322V326M1717.5 313V327M1718.5 315V325M1719.5 321V327M1720.5 319V351M1721.5 314V332M1722.5 314V342M1723.5 302V323M1724.5 302V326M1725.5 319V333M1726.5 308V332M1727.5 319V326M1728.5 323V335M1729.5 318V325M1730.5 306V319M1731.5 306V318M1732.5 311V341M1733.5 309V337M1734.5 302V314M1735.5 313V318M1736.5 314V326M1737.5 312V326M1738.5 314V325M1739.5 314V323M1740.5 313V320M1741.5 307V321M1742.5 307V319M1743.5 311V323M1744.5 319V329M1745.5 312V324M1746.5 318V328M1747.5 309V328M1748.5 304V370M1749.5 304V325M1750.5 297V313M1751.5 304V315M1752.5 306V317M1753.5 308V317M1754.5 301V324M1755.5 301V324M1756.5 305V309M1757.5 308V320M1758.5 298V322M1759.5 302V309M1760.5 297V309M1761.5 295V309M1762.5 300V309M1763.5 302V311M1764.5 299V311M1765.5 302V308M1766.5 297V316M1767.5 311V358M1768.5 297V358M1769.5 303V318M1770.5 293V307M1771.5 291V311M1772.5 295V311M1773.5 297V318M1774.5 291V304M1775.5 294V304M1776.5 293V314M1777.5 293V350M1778.5 289V350M1779.5 285V299M1780.5 289V306M1781.5 294V310M1782.5 299V310M1783.5 293V312M1784.5 299V318M1785.5 302V337M1786.5 306V337M1787.5 300V310M1788.5 297V310M1789.5 300V333M1790.5 307V333M1791.5 315V341M1792.5 311V324M1793.5 303V319M1794.5 312V328M1795.5 311V352M1796.5 311V325M1797.5 309V324M1798.5 310V324M1799.5 310V330M1800.5 318V334M1801.5 309V328M1802.5 317V363M1803.5 325V331M1804.5 319V340M1805.5 322V340M1806.5 322V339M1807.5 306V335M1808.5 324V336M1809.5 320V336M1810.5 329V359M1811.5 320V343M1812.5 323V350M1813.5 327V350M1814.5 326V345M1815.5 326V344M1816.5 331V339M1817.5 328V344M1818.5 333V343M1819.5 325V342M1820.5 331V351M1821.5 322V351M1822.5 338V351M1823.5 324V344M1824.5 326V383M1825.5 326V341M1826.5 331V351M1827.5 340V354M1828.5 327V341M1829.5 324V341M1830.5 329V353M1831.5 335V353M1832.5 337V355M1833.5 343V362M1834.5 347V355" fill="none" stroke="#ff3d3d" stroke-width="1" shape-rendering="crispEdges"/><path d="M1200.5 253V255M1201.5 253V254M1202.5 253V254M1203.5 252V254M1204.5 252V253M1205.5 252V253M1206.5 252V253M1207.5 251V253M1208.5 251V252M1209.5 251V252M1210.5 251V252M1211.5 250V252M1212.5 250V251M1213.5 250V251M1214.5 250V251M1215.5 250V251M1216.5 250V251M1217.5 250V251M1218.5 250V251M1219.5 250V251M1220.5 250V251M1221.5 250V251M1222.5 250V251M1223.5 250V251M1224.5 250V251M1225.5 250V251M1226.5 249V251M1227.5 250V251M1228.5 250V251M1229.5 250V252M1230.5 251V252M1231.5 251V253M1232.5 252V253M1233.5 252V253M1234.5 252V254M1235.5 253V254M1236.5 253V254M1237.5 253V255M1238.5 254V255M1239.5 254V256M1240.5 255V256M1241.5 255V256M1242.5 254V256M1243.5 254V255M1244.5 254V255M1245.5 254V255M1246.5 254V255M1247.5 253V255M1248.5 253V254M1249.5 252V254M1250.5 252V253M1251.5 252V253M1252.5 252V253M1253.5 252V253M1254.5 251V253M1255.5 251V252M1256.5 250V252M1257.5 250V252M1258.5 250V251M1259.5 250V251M1260.5 249V251M1261.5 249V250M1262.5 249V250M1263.5 249V250M1264.5 249V250M1265.5 249V250M1266.5 249V251M1267.5 250V251M1268.5 250V251M1269.5 250V252M1270.5 251V253M1271.5 252V254M1272.5 253V255M1273.5 254V257M1274.5 256V258M1275.5 257V259M1276.5 258V260M1277.5 258V260M1278.5 258V259M1279.5 258V259M1280.5 257V259M1281.5 256V258M1282.5 255V257M1283.5 255V256M1284.5 254V256M1285.5 254V255M1286.5 253V255M1287.5 252V254M1288.5 252V253M1289.5 251V253M1290.5 250V252M1291.5 250V251M1292.5 249V251M1293.5 249V250M1294.5 249V250M1295.5 249V250M1296.5 249V250M1297.5 249V250M1298.5 249V250M1299.5 249V251M1300.5 250V251M1301.5 250V251M1302.5 250V251M1303.5 250V252M1304.5 251V252M1305.5 251V252M1306.5 251V252M1307.5 251V252M1308.5 251V252M1309.5 251V252M1310.5 251V252M1311.5 249V252M1312.5 248V250M1313.5 247V249M1314.5 246V248M1315.5 244V247M1316.5 244V245M1317.5 244V246M1318.5 245V246M1319.5 245V247M1320.5 246V247M1321.5 246V247M1322.5 246V247M1323.5 246V248M1324.5 247V248M1325.5 247V248M1326.5 247V249M1327.5 248V249M1328.5 248V249M1329.5 248V249M1330.5 248V250M1331.5 247V250M1332.5 246V248M1333.5 245V247M1334.5 244V246M1335.5 242V245M1336.5 242V243M1337.5 241V243M1338.5 240V242M1339.5 239V241M1340.5 239V240M1341.5 238V240M1342.5 238V239M1343.5 237V239M1344.5 237V238M1345.5 236V238M1346.5 236V239M1347.5 238V240M1348.5 239V242M1349.5 241V244M1350.5 243V244M1351.5 243V244M1352.5 242V244M1353.5 242V244M1354.5 242V244M1355.5 242V244M1356.5 242V244M1357.5 241V243M1358.5 241V244M1359.5 243V244M1360.5 241V244M1361.5 240V242M1362.5 239V241M1363.5 238V240M1364.5 238V240M1365.5 236V239M1366.5 235V237M1367.5 234V236M1368.5 233V235M1369.5 233V234M1370.5 233V235M1371.5 233V235M1372.5 233V235M1373.5 232V234M1374.5 232V233M1375.5 232V233M1376.5 232V233M1377.5 232V233M1378.5 231V233M1379.5 231V232M1380.5 231V234M1381.5 231V233M1382.5 230V232M1383.5 229V231M1384.5 227V230M1385.5 225V228M1386.5 223V226M1387.5 222V224M1388.5 220V223M1389.5 220V222M1390.5 219V223M1391.5 219V220M1392.5 218V221M1393.5 216V219M1394.5 216V219M1395.5 215V219M1396.5 215V220M1397.5 216V220M1398.5 214V217M1399.5 214V215M1400.5 212V215M1401.5 210V213M1402.5 210V212M1403.5 209V213M1404.5 209V210M1405.5 209V210M1406.5 205V210M1407.5 206V209M1408.5 207V208M1409.5 204V208M1410.5 202V205M1411.5 201V205M1412.5 201V204M1413.5 201V204M1414.5 199V202M1415.5 198V202M1416.5 201V202M1417.5 201V205M1418.5 201V204M1419.5 202V205M1420.5 204V207M1421.5 203V207M1422.5 203V207M1423.5 206V207M1424.5 205V207M1425.5 205V206M1426.5 205V208M1427.5 207V208M1428.5 207V209M1429.5 208V210M1430.5 207V212M1431.5 207V211M1432.5 209V213M1433.5 210V213M1434.5 210V211M1435.5 210V217M1436.5 211V217M1437.5 208V212M1438.5 209V211M1439.5 209V210M1440.5 209V210M1441.5 206V210M1442.5 207V210M1443.5 209V215M1444.5 209V214M1445.5 208V213M1446.5 208V209M1447.5 203V209M1448.5 203V205M1449.5 201V205M1450.5 201V206M1451.5 200V206M1452.5 194V201M1453.5 195V199M1454.5 196V200M1455.5 197V200M1456.5 197V204M1457.5 203V213M1458.5 210V213M1459.5 210V211M1460.5 210V218M1461.5 215V221M1462.5 219V225M1463.5 223V225M1464.5 223V230M1465.5 226V232M1466.5 226V229M1467.5 228V233M1468.5 231V235M1469.5 231V235M1470.5 234V240M1471.5 239V242M1472.5 238V242M1473.5 239V242M1474.5 238V242M1475.5 238V249M1476.5 240V247M1477.5 243V246M1478.5 243V249M1479.5 248V249M1480.5 246V250M1481.5 246V248M1482.5 247V255M1483.5 252V255M1484.5 251V256M1485.5 252V256M1486.5 252V254M1487.5 253V256M1488.5 255V259M1489.5 258V260M1490.5 259V264M1491.5 263V267M1492.5 261V264M1493.5 263V267M1494.5 266V268M1495.5 266V269M1496.5 268V269M1497.5 268V276M1498.5 266V276M1499.5 265V268M1500.5 262V267M1501.5 262V266M1502.5 265V269M1503.5 262V268M1504.5 258V265M1505.5 261V273M1506.5 267V273M1507.5 263V268M1508.5 261V266M1509.5 261V264M1510.5 259V263M1511.5 256V260M1512.5 256V258M1513.5 247V258M1514.5 236V248M1515.5 233V242M1516.5 233V235M1517.5 228V235M1518.5 229V241M1519.5 240V247M1520.5 246V254M1521.5 251V255M1522.5 254V272M1523.5 267V271M1524.5 270V279M1525.5 274V284M1526.5 283V290M1527.5 289V295M1528.5 294V299M1529.5 297V304M1530.5 298V311M1531.5 310V321M1532.5 315V321M1533.5 316V327M1534.5 326V332M1535.5 331V348M1536.5 331V348M1537.5 326V349M1538.5 326V330M1539.5 322V329M1540.5 322V326M1541.5 320V329M1542.5 320V332M1543.5 323V332M1544.5 319V324M1545.5 313V320M1546.5 310V314M1547.5 305V311M1548.5 303V306M1549.5 289V304M1550.5 285V290M1551.5 273V286M1552.5 273V278M1553.5 267V278M1554.5 258V269M1555.5 253V259M1556.5 250V254M1557.5 244V251M1558.5 244V247M1559.5 246V250M1560.5 246V249M1561.5 248V258M1562.5 257V264M1563.5 263V270M1564.5 268V270M1565.5 269V275M1566.5 274V281M1567.5 280V286M1568.5 285V292M1569.5 287V293M1570.5 292V295M1571.5 292V295M1572.5 287V294M1573.5 293V299M1574.5 292V299M1575.5 286V293M1576.5 289V291M1577.5 288V291M1578.5 290V291M1579.5 289V291M1580.5 277V290M1581.5 277V278M1582.5 270V278M1583.5 259V271M1584.5 255V261M1585.5 250V256M1586.5 246V252M1587.5 236V247M1588.5 238V248M1589.5 243V248M1590.5 243V254M1591.5 253V260M1592.5 259V265M1593.5 264V268M1594.5 267V273M1595.5 272V289M1596.5 283V289M1597.5 283V293M1598.5 288V293M1599.5 286V289M1600.5 285V296M1601.5 280V286M1602.5 275V288M1603.5 276V285M1604.5 265V285M1605.5 264V280M1606.5 264V267M1607.5 255V267M1608.5 250V258M1609.5 247V251M1610.5 248V255M1611.5 253V262M1612.5 261V266M1613.5 265V269M1614.5 268V277M1615.5 270V277M1616.5 276V288M1617.5 287V293M1618.5 291V307M1619.5 295V304M1620.5 298V304M1621.5 300V307M1622.5 294V310M1623.5 291V295M1624.5 283V292M1625.5 280V284M1626.5 274V285M1627.5 271V285M1628.5 275V281M1629.5 280V288M1630.5 287V296M1631.5 293V295M1632.5 293V300M1633.5 299V319M1634.5 313V321M1635.5 318V326M1636.5 319V326M1637.5 313V322M1638.5 304V314M1639.5 304V315M1640.5 299V315M1641.5 293V300M1642.5 288V294M1643.5 288V299M1644.5 297V305M1645.5 304V321M1646.5 320V321M1647.5 320V329M1648.5 321V334M1649.5 330V340M1650.5 335V342M1651.5 335V337M1652.5 329V337M1653.5 326V331M1654.5 317V327M1655.5 306V318M1656.5 304V309M1657.5 292V311M1658.5 292V295M1659.5 294V310M1660.5 304V315M1661.5 306V319M1662.5 310V318M1663.5 315V318M1664.5 313V322M1665.5 309V315M1666.5 309V318M1667.5 300V310M1668.5 300V314M1669.5 292V303M1670.5 291V301M1671.5 296V301M1672.5 287V309M1673.5 294V309M1674.5 294V306M1675.5 295V301M1676.5 299V306M1677.5 299V303M1678.5 299V316M1679.5 310V316M1680.5 305V313M1681.5 312V318M1682.5 316V319M1683.5 307V318M1684.5 301V311M1685.5 304V311M1686.5 297V306M1687.5 298V307M1688.5 292V304M1689.5 296V300M1690.5 292V300M1691.5 296V307M1692.5 299V307M1693.5 299V307M1694.5 306V312M1695.5 309V330M1696.5 310V324M1697.5 312V333M1698.5 321V333M1699.5 316V327M1700.5 313V323M1701.5 322V325M1702.5 323V331M1703.5 313V336M1704.5 313V318M1705.5 311V318M1706.5 314V323M1707.5 305V318M1708.5 312V321M1709.5 320V332M1710.5 315V327M1711.5 315V334M1712.5 325V334M1713.5 319V332M1714.5 319V326M1715.5 320V328M1716.5 321V326M1717.5 316V322M1718.5 314V328M1719.5 314V333M1720.5 314V354M1721.5 309V319M1722.5 309V320M1723.5 310V317M1724.5 310V318M1725.5 310V323M1726.5 313V323M1727.5 310V320M1728.5 314V321M1729.5 306V325M1730.5 311V325M1731.5 299V319M1732.5 306V315M1733.5 309V314M1734.5 304V320M1735.5 306V322M1736.5 299V322M1737.5 312V330M1738.5 312V322M1739.5 316V318M1740.5 305V363M1741.5 300V321M1742.5 297V313M1743.5 297V309M1744.5 306V327M1745.5 295V327M1746.5 295V299M1747.5 298V306M1748.5 300V321M1749.5 305V321M1750.5 298V311M1751.5 299V302M1752.5 299V317M1753.5 293V304M1754.5 296V309M1755.5 297V329M1756.5 309V318M1757.5 295V320M1758.5 295V317M1759.5 292V317M1760.5 292V308M1761.5 297V309M1762.5 302V318M1763.5 301V318M1764.5 299V308M1765.5 300V317M1766.5 297V304M1767.5 302V322M1768.5 315V324M1769.5 315V324M1770.5 303V318M1771.5 303V321M1772.5 302V315M1773.5 293V308M1774.5 301V319M1775.5 303V314M1776.5 293V332M1777.5 297V312M1778.5 307V321M1779.5 306V319M1780.5 299V319M1781.5 299V318M1782.5 311V352M1783.5 302V318M1784.5 302V319M1785.5 303V321M1786.5 300V323M1787.5 311V327M1788.5 308V329M1789.5 309V318M1790.5 303V318M1791.5 304V332M1792.5 306V328M1793.5 311V319M1794.5 306V317M1795.5 306V337M1796.5 314V325M1797.5 314V323M1798.5 314V333M1799.5 310V357M1800.5 310V326M1801.5 311V332M1802.5 327V336M1803.5 317V336M1804.5 317V329M1805.5 318V330M1806.5 309V336M1807.5 317V336M1808.5 319V333M1809.5 319V334M1810.5 326V330M1811.5 317V337M1812.5 319V348M1813.5 316V337M1814.5 325V337M1815.5 322V337M1816.5 323V346M1817.5 312V340M1818.5 321V333M1819.5 325V336M1820.5 325V340M1821.5 326V333M1822.5 322V336M1823.5 319V335M1824.5 328V338M1825.5 328V350M1826.5 330V342M1827.5 327V343M1828.5 320V330M1829.5 320V337M1830.5 331V340M1831.5 324V351M1832.5 324V390M1833.5 313V332M1834.5 323V336" fill="none" stroke="#0656cc" stroke-width="1" shape-rendering="crispEdges"/></svg>
<div style="position:absolute;left:1757px;top:184px;font-size:12.2px;line-height:1;color:#000;white-space:pre;">Mic 1</div>
<div style="position:absolute;left:1757px;top:206px;font-size:12.2px;line-height:1;color:#000;white-space:pre;">Mic 2</div>
<svg style="position:absolute;left:1808px;top:181px" width="30" height="19" viewBox="0 0 30 19"><rect x="0" y="0" width="28" height="18" fill="#fff"/><path d="M0.5 17V0.5H20.5" fill="none" stroke="#bdbdbd" stroke-width="1"/><path d="M9.5 0V1.5M18.5 0V1.5" stroke="#333" stroke-width="1"/><path d="M0 17.5H21" stroke="#333" stroke-width="1"/><path d="M2 12.5L10.5 3L18.5 12.5L27 3" fill="none" stroke="#0656cc" stroke-width="1.1"/></svg>
<svg style="position:absolute;left:1808px;top:203px" width="30" height="19" viewBox="0 0 30 19"><rect x="0" y="0" width="28" height="18" fill="#fff"/><path d="M0.5 17V0.5H20.5" fill="none" stroke="#bdbdbd" stroke-width="1"/><path d="M9.5 0V1.5M18.5 0V1.5" stroke="#333" stroke-width="1"/><path d="M0 17.5H21" stroke="#333" stroke-width="1"/><path d="M2 12.5L10.5 3L18.5 12.5L27 3" fill="none" stroke="#ff3d3d" stroke-width="1.1"/></svg>
<div style="position:absolute;left:1117px;top:171px;width:80px;text-align:right;font-size:13px;line-height:1;color:#000;white-space:pre;">100.00</div>
<div style="position:absolute;left:1117px;top:197px;width:80px;text-align:right;font-size:13px;line-height:1;color:#000;white-space:pre;">90.00</div>
<div style="position:absolute;left:1117px;top:222px;width:80px;text-align:right;font-size:13px;line-height:1;color:#000;white-space:pre;">80.00</div>
<div style="position:absolute;left:1117px;top:248px;width:80px;text-align:right;font-size:13px;line-height:1;color:#000;white-space:pre;">70.00</div>
<div style="position:absolute;left:1117px;top:274px;width:80px;text-align:right;font-size:13px;line-height:1;color:#000;white-space:pre;">60.00</div>
<div style="position:absolute;left:1117px;top:300px;width:80px;text-align:right;font-size:13px;line-height:1;color:#000;white-space:pre;">50.00</div>
<div style="position:absolute;left:1117px;top:325px;width:80px;text-align:right;font-size:13px;line-height:1;color:#000;white-space:pre;">40.00</div>
<div style="position:absolute;left:1117px;top:351px;width:80px;text-align:right;font-size:13px;line-height:1;color:#000;white-space:pre;">30.00</div>
<div style="position:absolute;left:1117px;top:377px;width:80px;text-align:right;font-size:13px;line-height:1;color:#000;white-space:pre;">20.00</div>
<div style="position:absolute;left:1117px;top:403px;width:80px;text-align:right;font-size:13px;line-height:1;color:#000;white-space:pre;">10.00</div>
<div style="position:absolute;left:1117px;top:428px;width:80px;text-align:right;font-size:13px;line-height:1;color:#000;white-space:pre;">0.00</div>
<div style="position:absolute;left:1117px;top:454px;width:80px;text-align:right;font-size:13px;line-height:1;color:#000;white-space:pre;">-10.00</div>
<div style="position:absolute;left:1160.5px;top:468px;width:80px;text-align:center;font-size:13px;line-height:1;color:#000;white-space:pre;">20</div>
<div style="position:absolute;left:1324.6911477478816px;top:468px;width:80px;text-align:center;font-size:13px;line-height:1;color:#000;white-space:pre;">100</div>
<div style="position:absolute;left:1559.5955738739408px;top:468px;width:80px;text-align:center;font-size:13px;line-height:1;color:#000;white-space:pre;">1000</div>
<div style="position:absolute;left:1793.0px;top:468px;width:80px;text-align:center;font-size:13px;line-height:1;color:#000;white-space:pre;">10000</div>
<div style="position:absolute;left:1423.0px;top:485px;width:160px;text-align:center;font-size:12.2px;line-height:1;color:#000;white-space:pre;">Frequency(Hz)</div>
<div style="position:absolute;left:995px;top:305.5px;width:300px;text-align:center;font-size:13px;line-height:1;color:#000;white-space:pre;letter-spacing:0px;transform:rotate(-90deg);">Auto Power (dB)</div>
<div style="position:absolute;left:455px;top:519px;width:648px;height:265px;box-sizing:border-box;background:#fff"></div>
<svg style="position:absolute;left:455px;top:519px" width="648" height="265" viewBox="455 519 648 265"><line x1="497.5" y1="519" x2="497.5" y2="784" stroke="#e4e4e4" stroke-width="1"/><line x1="527.5" y1="519" x2="527.5" y2="784" stroke="#e4e4e4" stroke-width="1"/><line x1="550.5" y1="519" x2="550.5" y2="784" stroke="#e4e4e4" stroke-width="1"/><line x1="569.5" y1="519" x2="569.5" y2="784" stroke="#e4e4e4" stroke-width="1"/><line x1="585.5" y1="519" x2="585.5" y2="784" stroke="#e4e4e4" stroke-width="1"/><line x1="599.5" y1="519" x2="599.5" y2="784" stroke="#e4e4e4" stroke-width="1"/><line x1="612.5" y1="519" x2="612.5" y2="784" stroke="#e4e4e4" stroke-width="1"/><line x1="623.5" y1="519" x2="623.5" y2="784" stroke="#d0d0d0" stroke-width="1"/><line x1="695.5" y1="519" x2="695.5" y2="784" stroke="#e4e4e4" stroke-width="1"/><line x1="737.5" y1="519" x2="737.5" y2="784" stroke="#e4e4e4" stroke-width="1"/><line x1="767.5" y1="519" x2="767.5" y2="784" stroke="#e4e4e4" stroke-width="1"/><line x1="790.5" y1="519" x2="790.5" y2="784" stroke="#e4e4e4" stroke-width="1"/><line x1="809.5" y1="519" x2="809.5" y2="784" stroke="#e4e4e4" stroke-width="1"/><line x1="825.5" y1="519" x2="825.5" y2="784" stroke="#e4e4e4" stroke-width="1"/><line x1="839.5" y1="519" x2="839.5" y2="784" stroke="#e4e4e4" stroke-width="1"/><line x1="851.5" y1="519" x2="851.5" y2="784" stroke="#e4e4e4" stroke-width="1"/><line x1="862.5" y1="519" x2="862.5" y2="784" stroke="#d0d0d0" stroke-width="1"/><line x1="934.5" y1="519" x2="934.5" y2="784" stroke="#e4e4e4" stroke-width="1"/><line x1="977.5" y1="519" x2="977.5" y2="784" stroke="#e4e4e4" stroke-width="1"/><line x1="1007.5" y1="519" x2="1007.5" y2="784" stroke="#e4e4e4" stroke-width="1"/><line x1="1030.5" y1="519" x2="1030.5" y2="784" stroke="#e4e4e4" stroke-width="1"/><line x1="1049.5" y1="519" x2="1049.5" y2="784" stroke="#e4e4e4" stroke-width="1"/><line x1="1065.5" y1="519" x2="1065.5" y2="784" stroke="#e4e4e4" stroke-width="1"/><line x1="1079.5" y1="519" x2="1079.5" y2="784" stroke="#e4e4e4" stroke-width="1"/><line x1="1091.5" y1="519" x2="1091.5" y2="784" stroke="#e4e4e4" stroke-width="1"/><line x1="455" y1="539.5" x2="1103" y2="539.5" stroke="#d2d2d2" stroke-width="1"/><line x1="455" y1="560.5" x2="1103" y2="560.5" stroke="#d2d2d2" stroke-width="1"/><line x1="455" y1="580.5" x2="1103" y2="580.5" stroke="#d2d2d2" stroke-width="1"/><line x1="455" y1="600.5" x2="1103" y2="600.5" stroke="#d2d2d2" stroke-width="1"/><line x1="455" y1="621.5" x2="1103" y2="621.5" stroke="#d2d2d2" stroke-width="1"/><line x1="455" y1="641.5" x2="1103" y2="641.5" stroke="#d2d2d2" stroke-width="1"/><line x1="455" y1="661.5" x2="1103" y2="661.5" stroke="#d2d2d2" stroke-width="1"/><line x1="455" y1="681.5" x2="1103" y2="681.5" stroke="#d2d2d2" stroke-width="1"/><line x1="455" y1="702.5" x2="1103" y2="702.5" stroke="#d2d2d2" stroke-width="1"/><line x1="455" y1="722.5" x2="1103" y2="722.5" stroke="#d2d2d2" stroke-width="1"/><line x1="455" y1="742.5" x2="1103" y2="742.5" stroke="#d2d2d2" stroke-width="1"/><line x1="455" y1="763.5" x2="1103" y2="763.5" stroke="#d2d2d2" stroke-width="1"/><path d="M455.5 773V774M456.5 773V774M457.5 773V774M458.5 773V774M459.5 773V774M460.5 773V774M461.5 773V774M462.5 773V774M463.5 773V774M464.5 773V774M465.5 773V774M466.5 773V774M467.5 773V774M468.5 773V774M469.5 773V774M470.5 773V774M471.5 773V774M472.5 773V774M473.5 773V774M474.5 773V774M475.5 773V774M476.5 773V774M477.5 773V774M478.5 773V774M479.5 773V774M480.5 773V774M481.5 773V774M482.5 773V774M483.5 773V774M484.5 773V774M485.5 773V774M486.5 773V774M487.5 773V774M488.5 773V774M489.5 773V774M490.5 773V774M491.5 773V774M492.5 773V774M493.5 773V774M494.5 773V774M495.5 773V774M496.5 773V774M497.5 773V774M498.5 773V774M499.5 773V774M500.5 773V774M501.5 773V774M502.5 773V774M503.5 773V774M504.5 773V774M505.5 773V774M506.5 773V774M507.5 773V774M508.5 773V774M509.5 773V774M510.5 773V774M511.5 773V774M512.5 773V774M513.5 773V774M514.5 773V774M515.5 773V774M516.5 773V774M517.5 773V774M518.5 773V774M519.5 773V774M520.5 773V774M521.5 773V774M522.5 773V774M523.5 773V774M524.5 773V774M525.5 773V774M526.5 773V774M527.5 773V774M528.5 773V774M529.5 773V774M530.5 773V774M531.5 773V774M532.5 773V774M533.5 773V774M534.5 773V774M535.5 773V774M536.5 773V774M537.5 773V774M538.5 773V774M539.5 773V774M540.5 773V774M541.5 773V774M542.5 773V774M543.5 773V774M544.5 773V774M545.5 773V774M546.5 773V774M547.5 773V774M548.5 773V774M549.5 773V774M550.5 773V774M551.5 773V774M552.5 773V774M553.5 773V774M554.5 773V774M555.5 773V774M556.5 773V774M557.5 773V774M558.5 773V774M559.5 773V774M560.5 773V774M561.5 773V774M562.5 773V774M563.5 773V774M564.5 773V774M565.5 773V774M566.5 773V774M567.5 773V774M568.5 773V774M569.5 773V774M570.5 773V774M571.5 773V774M572.5 773V774M573.5 773V774M574.5 773V774M575.5 773V774M576.5 773V774M577.5 773V774M578.5 773V774M579.5 773V774M580.5 773V774M581.5 773V774M582.5 773V774M583.5 773V774M584.5 773V774M585.5 773V774M586.5 773V774M587.5 773V774M588.5 773V774M589.5 773V774M590.5 773V774M591.5 773V774M592.5 773V774M593.5 773V774M594.5 773V774M595.5 773V774M596.5 773V774M597.5 773V774M598.5 773V774M599.5 773V774M600.5 773V774M601.5 773V774M602.5 773V774M603.5 773V774M604.5 773V774M605.5 773V774M606.5 773V774M607.5 773V774M608.5 773V774M609.5 773V774M610.5 773V774M611.5 773V774M612.5 773V774M613.5 773V774M614.5 773V774M615.5 773V774M616.5 773V774M617.5 773V774M618.5 773V774M619.5 773V774M620.5 773V774M621.5 773V774M622.5 773V774M623.5 773V774M624.5 773V774M625.5 773V774M626.5 773V774M627.5 773V774M628.5 773V774M629.5 773V774M630.5 773V774M631.5 773V774M632.5 773V774M633.5 773V774M634.5 773V774M635.5 773V774M636.5 773V774M637.5 773V774M638.5 773V774M639.5 773V774M640.5 773V774M641.5 773V774M642.5 773V774M643.5 773V774M644.5 773V774M645.5 773V774M646.5 773V774M647.5 773V774M648.5 773V774M649.5 773V774M650.5 773V774M651.5 773V774M652.5 773V774M653.5 773V774M654.5 773V774M655.5 773V774M656.5 773V774M657.5 773V774M658.5 773V774M659.5 773V774M660.5 773V774M661.5 773V774M662.5 773V774M663.5 773V774M664.5 773V774M665.5 773V774M666.5 773V774M667.5 773V774M668.5 773V774M669.5 773V774M670.5 773V774M671.5 773V774M672.5 773V774M673.5 773V774M674.5 773V774M675.5 773V774M676.5 773V774M677.5 773V774M678.5 773V774M679.5 773V774M680.5 773V774M681.5 773V774M682.5 773V774M683.5 773V774M684.5 773V774M685.5 773V774M686.5 773V774M687.5 773V774M688.5 773V774M689.5 773V774M690.5 773V774M691.5 773V774M692.5 773V774M693.5 773V774M694.5 773V774M695.5 773V774M696.5 773V774M697.5 773V774M698.5 773V774M699.5 773V774M700.5 772V774M701.5 772V773M702.5 772V773M703.5 772V773M704.5 772V773M705.5 772V773M706.5 772V773M707.5 772V773M708.5 772V773M709.5 772V773M710.5 772V773M711.5 772V773M712.5 772V773M713.5 772V773M714.5 772V773M715.5 772V773M716.5 772V773M717.5 772V773M718.5 772V773M719.5 772V773M720.5 772V773M721.5 772V773M722.5 772V773M723.5 772V773M724.5 772V773M725.5 772V773M726.5 772V773M727.5 772V773M728.5 772V773M729.5 772V773M730.5 772V773M731.5 772V773M732.5 772V773M733.5 771V773M734.5 771V772M735.5 771V772M736.5 771V772M737.5 771V772M738.5 771V772M739.5 771V772M740.5 771V772M741.5 771V772M742.5 771V772M743.5 771V772M744.5 771V772M745.5 771V772M746.5 771V772M747.5 770V772M748.5 770V771M749.5 770V771M750.5 770V771M751.5 770V771M752.5 770V771M753.5 770V771M754.5 769V771M755.5 769V770M756.5 769V770M757.5 769V770M758.5 769V770M759.5 768V770M760.5 768V769M761.5 768V769M762.5 768V769M763.5 767V769M764.5 767V768M765.5 766V768M766.5 766V767M767.5 766V767M768.5 765V767M769.5 765V766M770.5 764V766M771.5 763V765M772.5 763V764M773.5 762V764M774.5 761V763M775.5 760V762M776.5 759V761M777.5 758V760M778.5 756V759M779.5 754V757M780.5 752V755M781.5 750V753M782.5 747V751M783.5 745V748M784.5 742V746M785.5 738V743M786.5 733V739M787.5 727V734M788.5 720V728M789.5 711V721M790.5 701V712M791.5 696V702M792.5 684V697M793.5 670V685M794.5 657V671M795.5 644V658M796.5 635V645M797.5 631V636M798.5 631V634M799.5 633V637M800.5 636V647M801.5 646V660M802.5 659V674M803.5 673V687M804.5 686V699M805.5 698V710M806.5 709V719M807.5 718V723M808.5 722V730M809.5 729V736M810.5 735V741M811.5 740V745M812.5 744V749M813.5 748V752M814.5 751V755M815.5 754V756M816.5 755V758M817.5 757V760M818.5 759V762M819.5 761V764M820.5 763V765M821.5 764V766M822.5 765V767M823.5 766V768M824.5 767V769M825.5 768V770M826.5 769V770M827.5 769V771M828.5 770V772M829.5 771V773M830.5 772V773M831.5 772V774M832.5 773V774M833.5 773V775M834.5 774V775M835.5 774V776M836.5 775V776M837.5 775V777M838.5 776V777M839.5 776V777M840.5 776V778M841.5 777V778M842.5 777V778M843.5 777V779M844.5 778V779M845.5 778V779M846.5 778V780M847.5 779V780M848.5 779V780M849.5 779V780M850.5 779V780M851.5 779V780M852.5 779V780M853.5 779V781M854.5 780V781M855.5 780V781M856.5 780V781M857.5 780V781M858.5 780V781M859.5 780V781M860.5 780V781M861.5 780V781M862.5 780V781M863.5 780V781M864.5 780V781M865.5 780V782M866.5 781V782M867.5 781V782M868.5 781V782M869.5 781V782M870.5 781V782M871.5 781V782M872.5 781V782M873.5 781V782M874.5 780V782M875.5 780V781M876.5 780V781M877.5 780V781M878.5 780V781M879.5 780V781M880.5 780V781M881.5 780V781M882.5 780V781M883.5 780V781M884.5 780V781M885.5 780V781M886.5 779V781M887.5 779V780M888.5 779V780M889.5 779V780M890.5 779V780M891.5 778V780M892.5 778V779M893.5 778V779M894.5 777V779M895.5 777V778M896.5 776V778M897.5 776V777M898.5 775V777M899.5 774V776M900.5 773V775M901.5 772V774M902.5 771V773M903.5 770V772M904.5 769V771M905.5 767V770M906.5 765V768M907.5 763V766M908.5 761V764M909.5 759V762M910.5 757V760M911.5 755V758M912.5 754V756M913.5 753V755M914.5 752V754M915.5 752V754M916.5 753V755M917.5 754V757M918.5 756V759M919.5 758V760M920.5 759V762M921.5 761V763M922.5 762V765M923.5 764V767M924.5 766V768M925.5 767V769M926.5 768V770M927.5 769V770M928.5 769V770M929.5 769V771M930.5 770V771M931.5 770V771M932.5 770V771M933.5 770V771M934.5 770V772M935.5 771V772M936.5 770V772M937.5 768V771M938.5 766V769M939.5 765V767M940.5 765V768M941.5 767V771M942.5 770V771M943.5 770V772M944.5 771V772M945.5 771V775M946.5 772V775M947.5 770V773M948.5 769V771M949.5 769V772M950.5 771V774M951.5 773V775M952.5 774V775M953.5 773V775M954.5 773V774M955.5 773V777M956.5 776V778M957.5 774V778M958.5 769V775M959.5 769V770M960.5 769V772M961.5 768V772M962.5 768V771M963.5 770V776M964.5 775V778M965.5 733V778M966.5 583V734M967.5 583V775M968.5 771V775M969.5 767V772M970.5 765V768M971.5 766V770M972.5 769V773M973.5 772V773M974.5 772V775M975.5 772V775M976.5 772V773M977.5 771V773M978.5 771V772M979.5 767V772M980.5 766V768M981.5 766V773M982.5 772V775M983.5 773V775M984.5 773V775M985.5 773V774M986.5 771V774M987.5 770V772M988.5 768V771M989.5 768V769M990.5 768V772M991.5 771V775M992.5 773V775M993.5 773V774M994.5 773V775M995.5 772V774M996.5 769V773M997.5 768V770M998.5 769V774M999.5 773V775M1000.5 773V774M1001.5 771V774M1002.5 770V772M1003.5 768V771M1004.5 769V772M1005.5 771V773M1006.5 772V774M1007.5 773V777M1008.5 776V779M1009.5 769V779M1010.5 769V774M1011.5 773V774M1012.5 769V774M1013.5 769V770M1014.5 761V773M1015.5 761V774M1016.5 773V775M1017.5 774V779M1018.5 763V776M1019.5 763V776M1020.5 771V775M1021.5 740V773M1022.5 740V777M1023.5 684V779M1024.5 756V779M1025.5 756V771M1026.5 765V772M1027.5 764V768M1028.5 764V775M1029.5 766V775M1030.5 756V769M1031.5 756V775M1032.5 772V776M1033.5 758V773M1034.5 758V770M1035.5 769V780M1036.5 767V780M1037.5 765V775M1038.5 773V777M1039.5 767V774M1040.5 767V777M1041.5 774V777M1042.5 774V777M1043.5 761V777M1044.5 765V777M1045.5 771V777M1046.5 771V779M1047.5 773V779M1048.5 759V775M1049.5 753V774M1050.5 753V777M1051.5 767V775M1052.5 759V768M1053.5 585V771M1054.5 762V771M1055.5 762V776M1056.5 759V773M1057.5 759V772M1058.5 763V778M1059.5 756V777M1060.5 763V772M1061.5 771V780M1062.5 767V776M1063.5 767V772M1064.5 769V777M1065.5 737V781M1066.5 775V780M1067.5 765V780M1068.5 765V778M1069.5 769V779M1070.5 767V770M1071.5 761V769M1072.5 753V770M1073.5 753V777M1074.5 775V780M1075.5 771V780M1076.5 751V775M1077.5 569V777M1078.5 762V775M1079.5 762V778M1080.5 765V771M1081.5 770V782M1082.5 762V775M1083.5 762V775M1084.5 766V775M1085.5 757V779M1086.5 776V779M1087.5 766V777M1088.5 767V773M1089.5 763V781M1090.5 776V779M1091.5 761V777M1092.5 755V771M1093.5 755V776M1094.5 758V769M1095.5 756V773M1096.5 772V778M1097.5 767V780M1098.5 727V771M1099.5 689V770M1100.5 756V782M1101.5 758V773M1102.5 772V774" fill="none" stroke="#0656cc" stroke-width="1" shape-rendering="crispEdges"/></svg>
<div style="position:absolute;left:372px;top:513px;width:80px;text-align:right;font-size:13px;line-height:1;color:#000;white-space:pre;">26.00</div>
<div style="position:absolute;left:372px;top:533px;width:80px;text-align:right;font-size:13px;line-height:1;color:#000;white-space:pre;">24.00</div>
<div style="position:absolute;left:372px;top:554px;width:80px;text-align:right;font-size:13px;line-height:1;color:#000;white-space:pre;">22.00</div>
<div style="position:absolute;left:372px;top:574px;width:80px;text-align:right;font-size:13px;line-height:1;color:#000;white-space:pre;">20.00</div>
<div style="position:absolute;left:372px;top:595px;width:80px;text-align:right;font-size:13px;line-height:1;color:#000;white-space:pre;">18.00</div>
<div style="position:absolute;left:372px;top:615px;width:80px;text-align:right;font-size:13px;line-height:1;color:#000;white-space:pre;">16.00</div>
<div style="position:absolute;left:372px;top:635px;width:80px;text-align:right;font-size:13px;line-height:1;color:#000;white-space:pre;">14.00</div>
<div style="position:absolute;left:372px;top:656px;width:80px;text-align:right;font-size:13px;line-height:1;color:#000;white-space:pre;">12.00</div>
<div style="position:absolute;left:372px;top:676px;width:80px;text-align:right;font-size:13px;line-height:1;color:#000;white-space:pre;">10.00</div>
<div style="position:absolute;left:372px;top:696px;width:80px;text-align:right;font-size:13px;line-height:1;color:#000;white-space:pre;">8.00</div>
<div style="position:absolute;left:372px;top:717px;width:80px;text-align:right;font-size:13px;line-height:1;color:#000;white-space:pre;">6.00</div>
<div style="position:absolute;left:372px;top:737px;width:80px;text-align:right;font-size:13px;line-height:1;color:#000;white-space:pre;">4.00</div>
<div style="position:absolute;left:372px;top:758px;width:80px;text-align:right;font-size:13px;line-height:1;color:#000;white-space:pre;">2.00</div>
<div style="position:absolute;left:372px;top:778px;width:80px;text-align:right;font-size:13px;line-height:1;color:#000;white-space:pre;">0.00</div>
<div style="position:absolute;left:415.5px;top:792px;width:80px;text-align:center;font-size:13px;line-height:1;color:#000;white-space:pre;">20</div>
<div style="position:absolute;left:583.0578432064344px;top:792px;width:80px;text-align:center;font-size:13px;line-height:1;color:#000;white-space:pre;">100</div>
<div style="position:absolute;left:822.7789216032172px;top:792px;width:80px;text-align:center;font-size:13px;line-height:1;color:#000;white-space:pre;">1000</div>
<div style="position:absolute;left:1061.0px;top:792px;width:80px;text-align:center;font-size:13px;line-height:1;color:#000;white-space:pre;">10000</div>
<div style="position:absolute;left:791.0px;top:809px;width:160px;text-align:center;font-size:12.2px;line-height:1;color:#000;white-space:pre;">Frequency (Hz)</div>
<div style="position:absolute;left:258px;top:639.9px;width:300px;text-align:center;font-size:12.2px;line-height:1;color:#000;white-space:pre;letter-spacing:0px;transform:rotate(-90deg);">FRF</div>
<div style="position:absolute;left:1197px;top:519px;width:637px;height:265px;box-sizing:border-box;background:#fff"></div>
<svg style="position:absolute;left:1197px;top:519px" width="637" height="265" viewBox="1197 519 637 265"><line x1="1238.5" y1="519" x2="1238.5" y2="784" stroke="#e4e4e4" stroke-width="1"/><line x1="1268.5" y1="519" x2="1268.5" y2="784" stroke="#e4e4e4" stroke-width="1"/><line x1="1291.5" y1="519" x2="1291.5" y2="784" stroke="#e4e4e4" stroke-width="1"/><line x1="1309.5" y1="519" x2="1309.5" y2="784" stroke="#e4e4e4" stroke-width="1"/><line x1="1325.5" y1="519" x2="1325.5" y2="784" stroke="#e4e4e4" stroke-width="1"/><line x1="1339.5" y1="519" x2="1339.5" y2="784" stroke="#e4e4e4" stroke-width="1"/><line x1="1351.5" y1="519" x2="1351.5" y2="784" stroke="#e4e4e4" stroke-width="1"/><line x1="1362.5" y1="519" x2="1362.5" y2="784" stroke="#d0d0d0" stroke-width="1"/><line x1="1433.5" y1="519" x2="1433.5" y2="784" stroke="#e4e4e4" stroke-width="1"/><line x1="1474.5" y1="519" x2="1474.5" y2="784" stroke="#e4e4e4" stroke-width="1"/><line x1="1504.5" y1="519" x2="1504.5" y2="784" stroke="#e4e4e4" stroke-width="1"/><line x1="1526.5" y1="519" x2="1526.5" y2="784" stroke="#e4e4e4" stroke-width="1"/><line x1="1545.5" y1="519" x2="1545.5" y2="784" stroke="#e4e4e4" stroke-width="1"/><line x1="1561.5" y1="519" x2="1561.5" y2="784" stroke="#e4e4e4" stroke-width="1"/><line x1="1575.5" y1="519" x2="1575.5" y2="784" stroke="#e4e4e4" stroke-width="1"/><line x1="1587.5" y1="519" x2="1587.5" y2="784" stroke="#e4e4e4" stroke-width="1"/><line x1="1597.5" y1="519" x2="1597.5" y2="784" stroke="#d0d0d0" stroke-width="1"/><line x1="1668.5" y1="519" x2="1668.5" y2="784" stroke="#e4e4e4" stroke-width="1"/><line x1="1710.5" y1="519" x2="1710.5" y2="784" stroke="#e4e4e4" stroke-width="1"/><line x1="1739.5" y1="519" x2="1739.5" y2="784" stroke="#e4e4e4" stroke-width="1"/><line x1="1762.5" y1="519" x2="1762.5" y2="784" stroke="#e4e4e4" stroke-width="1"/><line x1="1781.5" y1="519" x2="1781.5" y2="784" stroke="#e4e4e4" stroke-width="1"/><line x1="1796.5" y1="519" x2="1796.5" y2="784" stroke="#e4e4e4" stroke-width="1"/><line x1="1810.5" y1="519" x2="1810.5" y2="784" stroke="#e4e4e4" stroke-width="1"/><line x1="1822.5" y1="519" x2="1822.5" y2="784" stroke="#e4e4e4" stroke-width="1"/><line x1="1197" y1="541.5" x2="1834" y2="541.5" stroke="#d2d2d2" stroke-width="1"/><line x1="1197" y1="563.5" x2="1834" y2="563.5" stroke="#d2d2d2" stroke-width="1"/><line x1="1197" y1="585.5" x2="1834" y2="585.5" stroke="#d2d2d2" stroke-width="1"/><line x1="1197" y1="607.5" x2="1834" y2="607.5" stroke="#d2d2d2" stroke-width="1"/><line x1="1197" y1="629.5" x2="1834" y2="629.5" stroke="#d2d2d2" stroke-width="1"/><line x1="1197" y1="651.5" x2="1834" y2="651.5" stroke="#d2d2d2" stroke-width="1"/><line x1="1197" y1="673.5" x2="1834" y2="673.5" stroke="#d2d2d2" stroke-width="1"/><line x1="1197" y1="695.5" x2="1834" y2="695.5" stroke="#d2d2d2" stroke-width="1"/><line x1="1197" y1="717.5" x2="1834" y2="717.5" stroke="#d2d2d2" stroke-width="1"/><line x1="1197" y1="739.5" x2="1834" y2="739.5" stroke="#d2d2d2" stroke-width="1"/><line x1="1197" y1="761.5" x2="1834" y2="761.5" stroke="#d2d2d2" stroke-width="1"/><path d="M1432.5 774V775M1433.5 772V775M1434.5 770V773M1435.5 770V773M1436.5 771V773M1437.5 771V772M1438.5 771V772M1439.5 770V772M1440.5 770V771M1441.5 768V771M1442.5 768V770M1443.5 769V771M1444.5 769V771M1445.5 769V772M1446.5 771V774M1447.5 769V773M1448.5 769V770M1449.5 768V770M1450.5 768V769M1451.5 768V769M1452.5 767V769M1453.5 767V768M1454.5 767V769M1455.5 768V769M1456.5 767V769M1457.5 767V769M1458.5 768V769M1459.5 767V769M1460.5 767V768M1461.5 767V769M1462.5 767V769M1463.5 766V768M1464.5 765V767M1465.5 765V767M1466.5 766V767M1467.5 766V769M1468.5 765V769M1469.5 764V766M1470.5 764V767M1471.5 763V767M1472.5 763V764M1473.5 763V765M1474.5 764V766M1475.5 764V766M1476.5 764V765M1477.5 763V766M1478.5 758V764M1479.5 759V766M1480.5 760V765M1481.5 759V761M1482.5 760V764M1483.5 763V764M1484.5 761V764M1485.5 759V762M1486.5 760V762M1487.5 761V763M1488.5 762V765M1489.5 761V763M1490.5 761V764M1491.5 760V764M1492.5 758V761M1493.5 758V762M1494.5 761V762M1495.5 759V762M1496.5 758V761M1497.5 754V761M1498.5 754V761M1499.5 759V761M1500.5 755V760M1501.5 756V759M1502.5 756V760M1503.5 753V760M1504.5 753V757M1505.5 756V760M1506.5 752V760M1507.5 752V756M1508.5 755V758M1509.5 755V760M1510.5 753V760M1511.5 753V757M1512.5 753V759M1513.5 755V759M1514.5 751V756M1515.5 751V758M1516.5 755V758M1517.5 755V757M1518.5 754V757M1519.5 751V755M1520.5 751V752M1521.5 749V756M1522.5 749V751M1523.5 750V753M1524.5 752V753M1525.5 747V753M1526.5 747V751M1527.5 750V753M1528.5 748V752M1529.5 748V750M1530.5 748V750M1531.5 746V750M1532.5 746V748M1533.5 746V748M1534.5 746V750M1535.5 747V750M1536.5 742V748M1537.5 743V745M1538.5 740V745M1539.5 740V745M1540.5 740V744M1541.5 740V742M1542.5 741V743M1543.5 739V743M1544.5 739V741M1545.5 739V741M1546.5 737V740M1547.5 736V738M1548.5 736V739M1549.5 736V738M1550.5 735V737M1551.5 734V736M1552.5 734V737M1553.5 733V735M1554.5 732V734M1555.5 732V734M1556.5 732V733M1557.5 730V733M1558.5 730V732M1559.5 730V732M1560.5 730V732M1561.5 730V732M1562.5 730V731M1563.5 728V732M1564.5 728V731M1565.5 729V731M1566.5 729V731M1567.5 729V731M1568.5 728V730M1569.5 728V731M1570.5 728V731M1571.5 728V730M1572.5 728V730M1573.5 728V730M1574.5 727V730M1575.5 727V728M1576.5 727V729M1577.5 728V729M1578.5 727V729M1579.5 725V728M1580.5 725V727M1581.5 724V727M1582.5 724V726M1583.5 723V725M1584.5 722V724M1585.5 720V723M1586.5 719V722M1587.5 718V721M1588.5 718V720M1589.5 716V719M1590.5 715V717M1591.5 713V716M1592.5 711V714M1593.5 709V713M1594.5 707V710M1595.5 706V708M1596.5 705V708M1597.5 703V706M1598.5 701V705M1599.5 701V702M1600.5 699V702M1601.5 698V700M1602.5 696V699M1603.5 696V697M1604.5 694V697M1605.5 693V695M1606.5 692V695M1607.5 690V693M1608.5 690V693M1609.5 688V692M1610.5 688V690M1611.5 687V689M1612.5 687V689M1613.5 686V689M1614.5 686V688M1615.5 686V687M1616.5 684V687M1617.5 684V686M1618.5 683V687M1619.5 683V685M1620.5 681V685M1621.5 681V684M1622.5 680V683M1623.5 678V681M1624.5 677V680M1625.5 676V678M1626.5 674V677M1627.5 672V675M1628.5 671V673M1629.5 669V672M1630.5 668V671M1631.5 667V669M1632.5 665V669M1633.5 665V667M1634.5 664V666M1635.5 663V665M1636.5 662V664M1637.5 660V663M1638.5 658V662M1639.5 658V660M1640.5 658V660M1641.5 656V659M1642.5 656V657M1643.5 654V657M1644.5 654V656M1645.5 654V655M1646.5 654V655M1647.5 653V655M1648.5 653V655M1649.5 651V655M1650.5 651V653M1651.5 651V653M1652.5 650V653M1653.5 649V651M1654.5 647V651M1655.5 646V648M1656.5 644V647M1657.5 642V645M1658.5 640V643M1659.5 638V641M1660.5 636V639M1661.5 634V637M1662.5 633V636M1663.5 634V636M1664.5 634V637M1665.5 636V638" fill="none" stroke="#0656cc" stroke-width="1" shape-rendering="crispEdges"/></svg>
<div style="position:absolute;left:1113px;top:513px;width:80px;text-align:right;font-size:13px;line-height:1;color:#000;white-space:pre;">1.20</div>
<div style="position:absolute;left:1113px;top:535px;width:80px;text-align:right;font-size:13px;line-height:1;color:#000;white-space:pre;">1.10</div>
<div style="position:absolute;left:1113px;top:557px;width:80px;text-align:right;font-size:13px;line-height:1;color:#000;white-space:pre;">1.00</div>
<div style="position:absolute;left:1113px;top:579px;width:80px;text-align:right;font-size:13px;line-height:1;color:#000;white-space:pre;">0.90</div>
<div style="position:absolute;left:1113px;top:601px;width:80px;text-align:right;font-size:13px;line-height:1;color:#000;white-space:pre;">0.80</div>
<div style="position:absolute;left:1113px;top:623px;width:80px;text-align:right;font-size:13px;line-height:1;color:#000;white-space:pre;">0.70</div>
<div style="position:absolute;left:1113px;top:646px;width:80px;text-align:right;font-size:13px;line-height:1;color:#000;white-space:pre;">0.60</div>
<div style="position:absolute;left:1113px;top:668px;width:80px;text-align:right;font-size:13px;line-height:1;color:#000;white-space:pre;">0.50</div>
<div style="position:absolute;left:1113px;top:690px;width:80px;text-align:right;font-size:13px;line-height:1;color:#000;white-space:pre;">0.40</div>
<div style="position:absolute;left:1113px;top:712px;width:80px;text-align:right;font-size:13px;line-height:1;color:#000;white-space:pre;">0.30</div>
<div style="position:absolute;left:1113px;top:734px;width:80px;text-align:right;font-size:13px;line-height:1;color:#000;white-space:pre;">0.20</div>
<div style="position:absolute;left:1113px;top:756px;width:80px;text-align:right;font-size:13px;line-height:1;color:#000;white-space:pre;">0.10</div>
<div style="position:absolute;left:1113px;top:778px;width:80px;text-align:right;font-size:13px;line-height:1;color:#000;white-space:pre;">0.00</div>
<div style="position:absolute;left:1157.5px;top:792px;width:80px;text-align:center;font-size:13px;line-height:1;color:#000;white-space:pre;">20</div>
<div style="position:absolute;left:1322.2091008953512px;top:792px;width:80px;text-align:center;font-size:13px;line-height:1;color:#000;white-space:pre;">100</div>
<div style="position:absolute;left:1557.8545504476756px;top:792px;width:80px;text-align:center;font-size:13px;line-height:1;color:#000;white-space:pre;">1000</div>
<div style="position:absolute;left:1792.0px;top:792px;width:80px;text-align:center;font-size:13px;line-height:1;color:#000;white-space:pre;">10000</div>
<div style="position:absolute;left:1423.0px;top:809px;width:160px;text-align:center;font-size:12.2px;line-height:1;color:#000;white-space:pre;">Frequency (Hz)</div>
<div style="position:absolute;left:1006.5px;top:640.7px;width:300px;text-align:center;font-size:12.6px;line-height:1;color:#000;white-space:pre;letter-spacing:0px;transform:rotate(-90deg);">Absorption coefficient</div>
</body></html>
